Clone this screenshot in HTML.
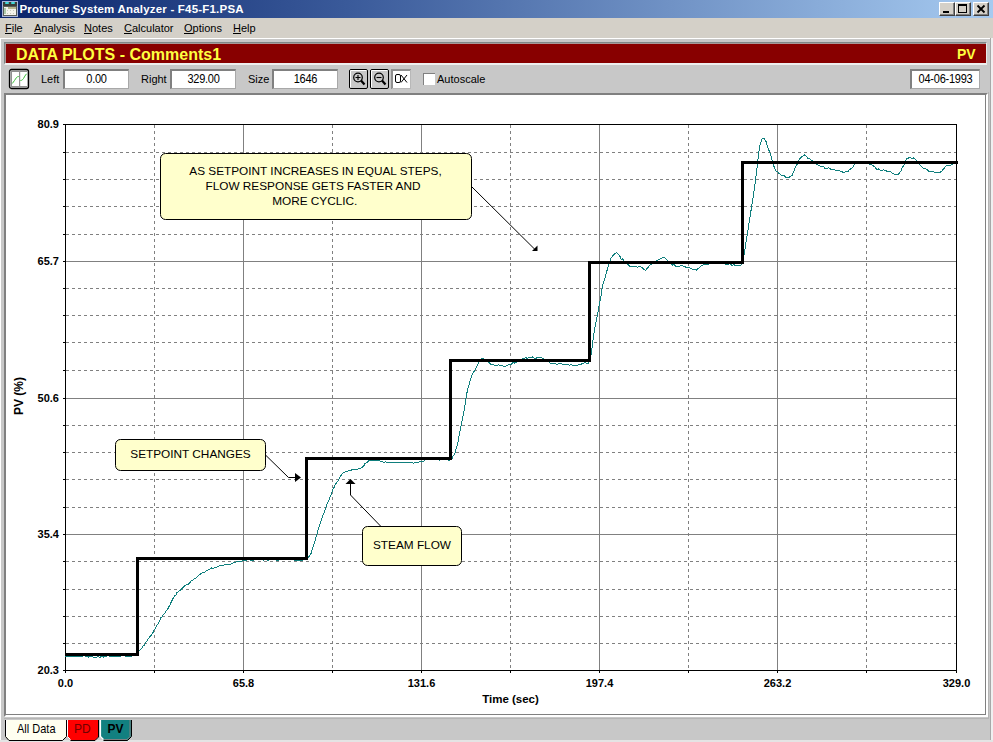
<!DOCTYPE html>
<html><head><meta charset="utf-8"><style>
*{margin:0;padding:0;box-sizing:border-box}
html,body{width:993px;height:742px;overflow:hidden;background:#d4d0c8;font-family:"Liberation Sans", sans-serif;position:relative}
.abs{position:absolute}
.menu span{position:absolute;top:22.5px;font-size:11px;line-height:11px}
.menu u{text-decoration:none;position:relative}
.menu u::after{content:"";position:absolute;left:0;right:0;top:11.5px;height:1px;background:#000}
.inp{position:absolute;background:#fff;border-top:2px solid #808080;border-left:2px solid #808080;border-right:1px solid #a8a8a8;border-bottom:1px solid #a8a8a8;font-size:11px;text-align:center;line-height:16px;letter-spacing:-0.25px}
.inp span{display:inline-block;transform:scaleY(1.08)}
.tbtn{position:absolute;width:16px;height:14px;top:2px;background:#d4d0c8;border-top:1px solid #fff;border-left:1px solid #fff;border-right:1px solid #404040;border-bottom:1px solid #404040;box-shadow:inset -1px -1px 0 #808080}
</style></head><body>
<!-- title bar -->
<div class="abs" style="left:0;top:0;width:993px;height:18px;background:linear-gradient(to right,#0a246a 0%,#3a5a9a 35%,#a6caf0 100%)"></div>
<svg width="20" height="18" style="position:absolute;left:0;top:0">
<rect x="2" y="1" width="16" height="16" fill="#a8b4d8"/>
<rect x="3" y="2" width="14" height="14" fill="#5a5e58"/>
<rect x="3" y="2" width="14" height="4" fill="#3a3e38"/>
<rect x="5" y="2" width="4" height="2" rx="1" fill="#40d8d8"/>
<rect x="11" y="2" width="4" height="2" rx="1" fill="#40d8d8"/>
<rect x="4" y="7" width="12" height="8" fill="#f4f4ec"/>
<rect x="8" y="7" width="8" height="2" fill="#b8b890"/>
<path d="M7 10h1v1h-1zM10 10h1v1h-1zM13 10h1v1h-1zM7 13h1v1h-1zM10 13h1v1h-1zM13 13h1v1h-1z" fill="#c8c8c0"/>
<path d="M5 8 V14" stroke="#68a068" stroke-width="1"/>
</svg>
<div class="abs" style="left:19.5px;top:1.5px;font-size:11.5px;letter-spacing:0.2px;font-weight:bold;color:#fff;line-height:14px;white-space:nowrap">Protuner System Analyzer - F45-F1.PSA</div>
<div class="tbtn" style="left:939px"><div class="abs" style="left:3px;top:8px;width:6px;height:2px;background:#000"></div></div>
<div class="tbtn" style="left:955px"><div class="abs" style="left:2px;top:1px;width:9px;height:9px;border:1px solid #000;border-top-width:2px"></div></div>
<div class="tbtn" style="left:973px;width:16px"><svg width="14" height="12" style="position:absolute;left:0;top:0"><path d="M3.5 2.5 L10.5 9.5 M10.5 2.5 L3.5 9.5" stroke="#000" stroke-width="1.8"/></svg></div>
<!-- menu -->
<div class="menu">
<span style="left:5px"><u>F</u>ile</span>
<span style="left:34px"><u>A</u>nalysis</span>
<span style="left:84px"><u>N</u>otes</span>
<span style="left:124px"><u>C</u>alculator</span>
<span style="left:184px"><u>O</u>ptions</span>
<span style="left:233px"><u>H</u>elp</span>
</div>
<div class="abs" style="left:0;top:38px;width:993px;height:1px;background:#fff"></div>
<div class="abs" style="left:1px;top:39px;width:990px;height:703px;background:#c8c8c8"></div>
<div class="abs" style="left:0;top:38px;width:1px;height:704px;background:#fff"></div>
<div class="abs" style="left:990px;top:38px;width:1px;height:704px;background:#a8a8a8"></div>
<div class="abs" style="left:991px;top:38px;width:2px;height:704px;background:#f0f0f0"></div>
<div class="abs" style="left:988px;top:92px;width:1px;height:627px;background:#b4b4b4"></div>
<div class="abs" style="left:4px;top:718px;width:985px;height:1px;background:#b4b4b4"></div>
<!-- red header -->
<div class="abs" style="left:4px;top:42px;width:983px;height:23px;border-top:1px solid #7f8888;border-left:1px solid #7f8888;border-bottom:2px solid #eeeeee;border-right:1px solid #e8e8e8;background:#880000;box-shadow:inset 1px 1px 0 #a89898"></div>
<div class="abs" style="left:16px;top:45.5px;font-size:16px;font-weight:bold;color:#ffff40;line-height:18px;white-space:nowrap">DATA PLOTS - Comments1</div>
<div class="abs" style="left:957px;top:45.5px;font-size:14px;font-weight:bold;color:#ffff40;line-height:16px">PV</div>
<!-- toolbar -->
<svg width="22" height="22" style="position:absolute;left:8px;top:68px">
<rect x="1.5" y="1.5" width="19" height="19" rx="2" fill="#c8c8c8" stroke="#000" stroke-width="1.3"/>
<rect x="3" y="3" width="16" height="16" fill="#909090"/>
<rect x="4" y="4" width="15" height="14" fill="#fff"/>
<rect x="11" y="4" width="1.2" height="14" fill="#909090"/>
<path d="M4.3 15.5 C6 13.5 7 11.5 8.5 9.5 C9 8.8 10 8.6 10.8 8.5" fill="none" stroke="#3cc03c" stroke-width="1"/>
<path d="M12.4 12.5 C13.5 12.5 14.3 12.2 15.5 10.5 C16.5 9 17.2 7 18.5 5.8" fill="none" stroke="#3cc03c" stroke-width="1"/>
</svg>
<div class="abs" style="left:41px;top:73px;font-size:11px;line-height:12px">Left</div>
<div class="inp" style="left:63px;top:69px;width:66px;height:20px"><span>0.00</span></div>
<div class="abs" style="left:141px;top:73px;font-size:11px;line-height:12px">Right</div>
<div class="inp" style="left:170px;top:69px;width:66px;height:20px"><span>329.00</span></div>
<div class="abs" style="left:248px;top:73px;font-size:11px;line-height:12px">Size</div>
<div class="inp" style="left:272px;top:69px;width:66px;height:20px"><span>1646</span></div>
<svg width="70" height="22" style="position:absolute;left:347px;top:68px">
<rect x="2.5" y="1.5" width="18" height="19" rx="1.5" fill="#c8c8c8" stroke="#000" stroke-width="1"/>
<path d="M3.5 19.5 V2.5 H19.5" stroke="#fff" fill="none"/>
<rect x="23.5" y="1.5" width="18" height="19" rx="1.5" fill="#c8c8c8" stroke="#000" stroke-width="1"/>
<path d="M24.5 19.5 V2.5 H40.5" stroke="#fff" fill="none"/>
<circle cx="11" cy="9.5" r="4.3" fill="none" stroke="#000" stroke-width="1.2"/>
<path d="M8.5 9.5 H13.5 M11 7 V12" stroke="#000" stroke-width="1.1"/>
<path d="M14 12.5 L17.5 16.5" stroke="#000" stroke-width="2.2"/>
<circle cx="32" cy="9.5" r="4.3" fill="none" stroke="#000" stroke-width="1.2"/>
<path d="M29.5 9.5 H34.5" stroke="#000" stroke-width="1.1"/>
<path d="M35 12.5 L38.5 16.5" stroke="#000" stroke-width="2.2"/>
<rect x="44" y="1" width="20" height="20" fill="#909090"/>
<rect x="46" y="3" width="17" height="17" fill="#fff"/>
<rect x="63" y="2" width="1" height="19" fill="#b8b8b8"/><rect x="45" y="20" width="19" height="1" fill="#b8b8b8"/>
<rect x="48.5" y="6.5" width="5" height="8" rx="1.5" fill="none" stroke="#000" stroke-width="1"/>
<path d="M54 7 L60 14.5 M60 7 L54 14.5" stroke="#000" stroke-width="1"/>
</svg>
<div class="abs" style="left:423px;top:73px;width:12px;height:12px;background:#fff;border-top:1px solid #808080;border-left:1px solid #808080"></div>
<div class="abs" style="left:437px;top:73px;font-size:11px;line-height:12px">Autoscale</div>
<div class="inp" style="left:910px;top:69px;width:70px;height:20px"><span>04-06-1993</span></div>
<!-- chart panel -->
<div class="abs" style="left:4px;top:93px;width:984px;height:624px;background:#fff;border-top:2px solid #808080;border-left:2px solid #808080;border-right:2px solid #fff;border-bottom:2px solid #fff;box-shadow:inset -1px -1px 0 #808080"></div>
<svg width="993" height="742" style="position:absolute;left:0;top:0">
<rect x="243" y="124" width="1" height="546" fill="#808080"/>
<rect x="421" y="124" width="1" height="546" fill="#808080"/>
<rect x="599" y="124" width="1" height="546" fill="#808080"/>
<rect x="777" y="124" width="1" height="546" fill="#808080"/>
<rect x="65" y="261" width="891" height="1" fill="#808080"/>
<rect x="65" y="398" width="891" height="1" fill="#808080"/>
<rect x="65" y="534" width="891" height="1" fill="#808080"/>
<path d="M66 152h3v1h-3zM72 152h3v1h-3zM78 152h3v1h-3zM84 152h3v1h-3zM90 152h3v1h-3zM96 152h3v1h-3zM102 152h3v1h-3zM108 152h3v1h-3zM114 152h3v1h-3zM120 152h3v1h-3zM126 152h3v1h-3zM132 152h3v1h-3zM138 152h3v1h-3zM144 152h3v1h-3zM150 152h3v1h-3zM156 152h3v1h-3zM162 152h3v1h-3zM168 152h3v1h-3zM174 152h3v1h-3zM180 152h3v1h-3zM186 152h3v1h-3zM192 152h3v1h-3zM198 152h3v1h-3zM204 152h3v1h-3zM210 152h3v1h-3zM216 152h3v1h-3zM222 152h3v1h-3zM228 152h3v1h-3zM234 152h3v1h-3zM240 152h3v1h-3zM246 152h3v1h-3zM252 152h3v1h-3zM258 152h3v1h-3zM264 152h3v1h-3zM270 152h3v1h-3zM276 152h3v1h-3zM282 152h3v1h-3zM288 152h3v1h-3zM294 152h3v1h-3zM300 152h3v1h-3zM306 152h3v1h-3zM312 152h3v1h-3zM318 152h3v1h-3zM324 152h3v1h-3zM330 152h3v1h-3zM336 152h3v1h-3zM342 152h3v1h-3zM348 152h3v1h-3zM354 152h3v1h-3zM360 152h3v1h-3zM366 152h3v1h-3zM372 152h3v1h-3zM378 152h3v1h-3zM384 152h3v1h-3zM390 152h3v1h-3zM396 152h3v1h-3zM402 152h3v1h-3zM408 152h3v1h-3zM414 152h3v1h-3zM420 152h3v1h-3zM426 152h3v1h-3zM432 152h3v1h-3zM438 152h3v1h-3zM444 152h3v1h-3zM450 152h3v1h-3zM456 152h3v1h-3zM462 152h3v1h-3zM468 152h3v1h-3zM474 152h3v1h-3zM480 152h3v1h-3zM486 152h3v1h-3zM492 152h3v1h-3zM498 152h3v1h-3zM504 152h3v1h-3zM510 152h3v1h-3zM516 152h3v1h-3zM522 152h3v1h-3zM528 152h3v1h-3zM534 152h3v1h-3zM540 152h3v1h-3zM546 152h3v1h-3zM552 152h3v1h-3zM558 152h3v1h-3zM564 152h3v1h-3zM570 152h3v1h-3zM576 152h3v1h-3zM582 152h3v1h-3zM588 152h3v1h-3zM594 152h3v1h-3zM600 152h3v1h-3zM606 152h3v1h-3zM612 152h3v1h-3zM618 152h3v1h-3zM624 152h3v1h-3zM630 152h3v1h-3zM636 152h3v1h-3zM642 152h3v1h-3zM648 152h3v1h-3zM654 152h3v1h-3zM660 152h3v1h-3zM666 152h3v1h-3zM672 152h3v1h-3zM678 152h3v1h-3zM684 152h3v1h-3zM690 152h3v1h-3zM696 152h3v1h-3zM702 152h3v1h-3zM708 152h3v1h-3zM714 152h3v1h-3zM720 152h3v1h-3zM726 152h3v1h-3zM732 152h3v1h-3zM738 152h3v1h-3zM744 152h3v1h-3zM750 152h3v1h-3zM756 152h3v1h-3zM762 152h3v1h-3zM768 152h3v1h-3zM774 152h3v1h-3zM780 152h3v1h-3zM786 152h3v1h-3zM792 152h3v1h-3zM798 152h3v1h-3zM804 152h3v1h-3zM810 152h3v1h-3zM816 152h3v1h-3zM822 152h3v1h-3zM828 152h3v1h-3zM834 152h3v1h-3zM840 152h3v1h-3zM846 152h3v1h-3zM852 152h3v1h-3zM858 152h3v1h-3zM864 152h3v1h-3zM870 152h3v1h-3zM876 152h3v1h-3zM882 152h3v1h-3zM888 152h3v1h-3zM894 152h3v1h-3zM900 152h3v1h-3zM906 152h3v1h-3zM912 152h3v1h-3zM918 152h3v1h-3zM924 152h3v1h-3zM930 152h3v1h-3zM936 152h3v1h-3zM942 152h3v1h-3zM948 152h3v1h-3zM954 152h2v1h-2zM66 179h3v1h-3zM72 179h3v1h-3zM78 179h3v1h-3zM84 179h3v1h-3zM90 179h3v1h-3zM96 179h3v1h-3zM102 179h3v1h-3zM108 179h3v1h-3zM114 179h3v1h-3zM120 179h3v1h-3zM126 179h3v1h-3zM132 179h3v1h-3zM138 179h3v1h-3zM144 179h3v1h-3zM150 179h3v1h-3zM156 179h3v1h-3zM162 179h3v1h-3zM168 179h3v1h-3zM174 179h3v1h-3zM180 179h3v1h-3zM186 179h3v1h-3zM192 179h3v1h-3zM198 179h3v1h-3zM204 179h3v1h-3zM210 179h3v1h-3zM216 179h3v1h-3zM222 179h3v1h-3zM228 179h3v1h-3zM234 179h3v1h-3zM240 179h3v1h-3zM246 179h3v1h-3zM252 179h3v1h-3zM258 179h3v1h-3zM264 179h3v1h-3zM270 179h3v1h-3zM276 179h3v1h-3zM282 179h3v1h-3zM288 179h3v1h-3zM294 179h3v1h-3zM300 179h3v1h-3zM306 179h3v1h-3zM312 179h3v1h-3zM318 179h3v1h-3zM324 179h3v1h-3zM330 179h3v1h-3zM336 179h3v1h-3zM342 179h3v1h-3zM348 179h3v1h-3zM354 179h3v1h-3zM360 179h3v1h-3zM366 179h3v1h-3zM372 179h3v1h-3zM378 179h3v1h-3zM384 179h3v1h-3zM390 179h3v1h-3zM396 179h3v1h-3zM402 179h3v1h-3zM408 179h3v1h-3zM414 179h3v1h-3zM420 179h3v1h-3zM426 179h3v1h-3zM432 179h3v1h-3zM438 179h3v1h-3zM444 179h3v1h-3zM450 179h3v1h-3zM456 179h3v1h-3zM462 179h3v1h-3zM468 179h3v1h-3zM474 179h3v1h-3zM480 179h3v1h-3zM486 179h3v1h-3zM492 179h3v1h-3zM498 179h3v1h-3zM504 179h3v1h-3zM510 179h3v1h-3zM516 179h3v1h-3zM522 179h3v1h-3zM528 179h3v1h-3zM534 179h3v1h-3zM540 179h3v1h-3zM546 179h3v1h-3zM552 179h3v1h-3zM558 179h3v1h-3zM564 179h3v1h-3zM570 179h3v1h-3zM576 179h3v1h-3zM582 179h3v1h-3zM588 179h3v1h-3zM594 179h3v1h-3zM600 179h3v1h-3zM606 179h3v1h-3zM612 179h3v1h-3zM618 179h3v1h-3zM624 179h3v1h-3zM630 179h3v1h-3zM636 179h3v1h-3zM642 179h3v1h-3zM648 179h3v1h-3zM654 179h3v1h-3zM660 179h3v1h-3zM666 179h3v1h-3zM672 179h3v1h-3zM678 179h3v1h-3zM684 179h3v1h-3zM690 179h3v1h-3zM696 179h3v1h-3zM702 179h3v1h-3zM708 179h3v1h-3zM714 179h3v1h-3zM720 179h3v1h-3zM726 179h3v1h-3zM732 179h3v1h-3zM738 179h3v1h-3zM744 179h3v1h-3zM750 179h3v1h-3zM756 179h3v1h-3zM762 179h3v1h-3zM768 179h3v1h-3zM774 179h3v1h-3zM780 179h3v1h-3zM786 179h3v1h-3zM792 179h3v1h-3zM798 179h3v1h-3zM804 179h3v1h-3zM810 179h3v1h-3zM816 179h3v1h-3zM822 179h3v1h-3zM828 179h3v1h-3zM834 179h3v1h-3zM840 179h3v1h-3zM846 179h3v1h-3zM852 179h3v1h-3zM858 179h3v1h-3zM864 179h3v1h-3zM870 179h3v1h-3zM876 179h3v1h-3zM882 179h3v1h-3zM888 179h3v1h-3zM894 179h3v1h-3zM900 179h3v1h-3zM906 179h3v1h-3zM912 179h3v1h-3zM918 179h3v1h-3zM924 179h3v1h-3zM930 179h3v1h-3zM936 179h3v1h-3zM942 179h3v1h-3zM948 179h3v1h-3zM954 179h2v1h-2zM66 206h3v1h-3zM72 206h3v1h-3zM78 206h3v1h-3zM84 206h3v1h-3zM90 206h3v1h-3zM96 206h3v1h-3zM102 206h3v1h-3zM108 206h3v1h-3zM114 206h3v1h-3zM120 206h3v1h-3zM126 206h3v1h-3zM132 206h3v1h-3zM138 206h3v1h-3zM144 206h3v1h-3zM150 206h3v1h-3zM156 206h3v1h-3zM162 206h3v1h-3zM168 206h3v1h-3zM174 206h3v1h-3zM180 206h3v1h-3zM186 206h3v1h-3zM192 206h3v1h-3zM198 206h3v1h-3zM204 206h3v1h-3zM210 206h3v1h-3zM216 206h3v1h-3zM222 206h3v1h-3zM228 206h3v1h-3zM234 206h3v1h-3zM240 206h3v1h-3zM246 206h3v1h-3zM252 206h3v1h-3zM258 206h3v1h-3zM264 206h3v1h-3zM270 206h3v1h-3zM276 206h3v1h-3zM282 206h3v1h-3zM288 206h3v1h-3zM294 206h3v1h-3zM300 206h3v1h-3zM306 206h3v1h-3zM312 206h3v1h-3zM318 206h3v1h-3zM324 206h3v1h-3zM330 206h3v1h-3zM336 206h3v1h-3zM342 206h3v1h-3zM348 206h3v1h-3zM354 206h3v1h-3zM360 206h3v1h-3zM366 206h3v1h-3zM372 206h3v1h-3zM378 206h3v1h-3zM384 206h3v1h-3zM390 206h3v1h-3zM396 206h3v1h-3zM402 206h3v1h-3zM408 206h3v1h-3zM414 206h3v1h-3zM420 206h3v1h-3zM426 206h3v1h-3zM432 206h3v1h-3zM438 206h3v1h-3zM444 206h3v1h-3zM450 206h3v1h-3zM456 206h3v1h-3zM462 206h3v1h-3zM468 206h3v1h-3zM474 206h3v1h-3zM480 206h3v1h-3zM486 206h3v1h-3zM492 206h3v1h-3zM498 206h3v1h-3zM504 206h3v1h-3zM510 206h3v1h-3zM516 206h3v1h-3zM522 206h3v1h-3zM528 206h3v1h-3zM534 206h3v1h-3zM540 206h3v1h-3zM546 206h3v1h-3zM552 206h3v1h-3zM558 206h3v1h-3zM564 206h3v1h-3zM570 206h3v1h-3zM576 206h3v1h-3zM582 206h3v1h-3zM588 206h3v1h-3zM594 206h3v1h-3zM600 206h3v1h-3zM606 206h3v1h-3zM612 206h3v1h-3zM618 206h3v1h-3zM624 206h3v1h-3zM630 206h3v1h-3zM636 206h3v1h-3zM642 206h3v1h-3zM648 206h3v1h-3zM654 206h3v1h-3zM660 206h3v1h-3zM666 206h3v1h-3zM672 206h3v1h-3zM678 206h3v1h-3zM684 206h3v1h-3zM690 206h3v1h-3zM696 206h3v1h-3zM702 206h3v1h-3zM708 206h3v1h-3zM714 206h3v1h-3zM720 206h3v1h-3zM726 206h3v1h-3zM732 206h3v1h-3zM738 206h3v1h-3zM744 206h3v1h-3zM750 206h3v1h-3zM756 206h3v1h-3zM762 206h3v1h-3zM768 206h3v1h-3zM774 206h3v1h-3zM780 206h3v1h-3zM786 206h3v1h-3zM792 206h3v1h-3zM798 206h3v1h-3zM804 206h3v1h-3zM810 206h3v1h-3zM816 206h3v1h-3zM822 206h3v1h-3zM828 206h3v1h-3zM834 206h3v1h-3zM840 206h3v1h-3zM846 206h3v1h-3zM852 206h3v1h-3zM858 206h3v1h-3zM864 206h3v1h-3zM870 206h3v1h-3zM876 206h3v1h-3zM882 206h3v1h-3zM888 206h3v1h-3zM894 206h3v1h-3zM900 206h3v1h-3zM906 206h3v1h-3zM912 206h3v1h-3zM918 206h3v1h-3zM924 206h3v1h-3zM930 206h3v1h-3zM936 206h3v1h-3zM942 206h3v1h-3zM948 206h3v1h-3zM954 206h2v1h-2zM66 234h3v1h-3zM72 234h3v1h-3zM78 234h3v1h-3zM84 234h3v1h-3zM90 234h3v1h-3zM96 234h3v1h-3zM102 234h3v1h-3zM108 234h3v1h-3zM114 234h3v1h-3zM120 234h3v1h-3zM126 234h3v1h-3zM132 234h3v1h-3zM138 234h3v1h-3zM144 234h3v1h-3zM150 234h3v1h-3zM156 234h3v1h-3zM162 234h3v1h-3zM168 234h3v1h-3zM174 234h3v1h-3zM180 234h3v1h-3zM186 234h3v1h-3zM192 234h3v1h-3zM198 234h3v1h-3zM204 234h3v1h-3zM210 234h3v1h-3zM216 234h3v1h-3zM222 234h3v1h-3zM228 234h3v1h-3zM234 234h3v1h-3zM240 234h3v1h-3zM246 234h3v1h-3zM252 234h3v1h-3zM258 234h3v1h-3zM264 234h3v1h-3zM270 234h3v1h-3zM276 234h3v1h-3zM282 234h3v1h-3zM288 234h3v1h-3zM294 234h3v1h-3zM300 234h3v1h-3zM306 234h3v1h-3zM312 234h3v1h-3zM318 234h3v1h-3zM324 234h3v1h-3zM330 234h3v1h-3zM336 234h3v1h-3zM342 234h3v1h-3zM348 234h3v1h-3zM354 234h3v1h-3zM360 234h3v1h-3zM366 234h3v1h-3zM372 234h3v1h-3zM378 234h3v1h-3zM384 234h3v1h-3zM390 234h3v1h-3zM396 234h3v1h-3zM402 234h3v1h-3zM408 234h3v1h-3zM414 234h3v1h-3zM420 234h3v1h-3zM426 234h3v1h-3zM432 234h3v1h-3zM438 234h3v1h-3zM444 234h3v1h-3zM450 234h3v1h-3zM456 234h3v1h-3zM462 234h3v1h-3zM468 234h3v1h-3zM474 234h3v1h-3zM480 234h3v1h-3zM486 234h3v1h-3zM492 234h3v1h-3zM498 234h3v1h-3zM504 234h3v1h-3zM510 234h3v1h-3zM516 234h3v1h-3zM522 234h3v1h-3zM528 234h3v1h-3zM534 234h3v1h-3zM540 234h3v1h-3zM546 234h3v1h-3zM552 234h3v1h-3zM558 234h3v1h-3zM564 234h3v1h-3zM570 234h3v1h-3zM576 234h3v1h-3zM582 234h3v1h-3zM588 234h3v1h-3zM594 234h3v1h-3zM600 234h3v1h-3zM606 234h3v1h-3zM612 234h3v1h-3zM618 234h3v1h-3zM624 234h3v1h-3zM630 234h3v1h-3zM636 234h3v1h-3zM642 234h3v1h-3zM648 234h3v1h-3zM654 234h3v1h-3zM660 234h3v1h-3zM666 234h3v1h-3zM672 234h3v1h-3zM678 234h3v1h-3zM684 234h3v1h-3zM690 234h3v1h-3zM696 234h3v1h-3zM702 234h3v1h-3zM708 234h3v1h-3zM714 234h3v1h-3zM720 234h3v1h-3zM726 234h3v1h-3zM732 234h3v1h-3zM738 234h3v1h-3zM744 234h3v1h-3zM750 234h3v1h-3zM756 234h3v1h-3zM762 234h3v1h-3zM768 234h3v1h-3zM774 234h3v1h-3zM780 234h3v1h-3zM786 234h3v1h-3zM792 234h3v1h-3zM798 234h3v1h-3zM804 234h3v1h-3zM810 234h3v1h-3zM816 234h3v1h-3zM822 234h3v1h-3zM828 234h3v1h-3zM834 234h3v1h-3zM840 234h3v1h-3zM846 234h3v1h-3zM852 234h3v1h-3zM858 234h3v1h-3zM864 234h3v1h-3zM870 234h3v1h-3zM876 234h3v1h-3zM882 234h3v1h-3zM888 234h3v1h-3zM894 234h3v1h-3zM900 234h3v1h-3zM906 234h3v1h-3zM912 234h3v1h-3zM918 234h3v1h-3zM924 234h3v1h-3zM930 234h3v1h-3zM936 234h3v1h-3zM942 234h3v1h-3zM948 234h3v1h-3zM954 234h2v1h-2zM66 288h3v1h-3zM72 288h3v1h-3zM78 288h3v1h-3zM84 288h3v1h-3zM90 288h3v1h-3zM96 288h3v1h-3zM102 288h3v1h-3zM108 288h3v1h-3zM114 288h3v1h-3zM120 288h3v1h-3zM126 288h3v1h-3zM132 288h3v1h-3zM138 288h3v1h-3zM144 288h3v1h-3zM150 288h3v1h-3zM156 288h3v1h-3zM162 288h3v1h-3zM168 288h3v1h-3zM174 288h3v1h-3zM180 288h3v1h-3zM186 288h3v1h-3zM192 288h3v1h-3zM198 288h3v1h-3zM204 288h3v1h-3zM210 288h3v1h-3zM216 288h3v1h-3zM222 288h3v1h-3zM228 288h3v1h-3zM234 288h3v1h-3zM240 288h3v1h-3zM246 288h3v1h-3zM252 288h3v1h-3zM258 288h3v1h-3zM264 288h3v1h-3zM270 288h3v1h-3zM276 288h3v1h-3zM282 288h3v1h-3zM288 288h3v1h-3zM294 288h3v1h-3zM300 288h3v1h-3zM306 288h3v1h-3zM312 288h3v1h-3zM318 288h3v1h-3zM324 288h3v1h-3zM330 288h3v1h-3zM336 288h3v1h-3zM342 288h3v1h-3zM348 288h3v1h-3zM354 288h3v1h-3zM360 288h3v1h-3zM366 288h3v1h-3zM372 288h3v1h-3zM378 288h3v1h-3zM384 288h3v1h-3zM390 288h3v1h-3zM396 288h3v1h-3zM402 288h3v1h-3zM408 288h3v1h-3zM414 288h3v1h-3zM420 288h3v1h-3zM426 288h3v1h-3zM432 288h3v1h-3zM438 288h3v1h-3zM444 288h3v1h-3zM450 288h3v1h-3zM456 288h3v1h-3zM462 288h3v1h-3zM468 288h3v1h-3zM474 288h3v1h-3zM480 288h3v1h-3zM486 288h3v1h-3zM492 288h3v1h-3zM498 288h3v1h-3zM504 288h3v1h-3zM510 288h3v1h-3zM516 288h3v1h-3zM522 288h3v1h-3zM528 288h3v1h-3zM534 288h3v1h-3zM540 288h3v1h-3zM546 288h3v1h-3zM552 288h3v1h-3zM558 288h3v1h-3zM564 288h3v1h-3zM570 288h3v1h-3zM576 288h3v1h-3zM582 288h3v1h-3zM588 288h3v1h-3zM594 288h3v1h-3zM600 288h3v1h-3zM606 288h3v1h-3zM612 288h3v1h-3zM618 288h3v1h-3zM624 288h3v1h-3zM630 288h3v1h-3zM636 288h3v1h-3zM642 288h3v1h-3zM648 288h3v1h-3zM654 288h3v1h-3zM660 288h3v1h-3zM666 288h3v1h-3zM672 288h3v1h-3zM678 288h3v1h-3zM684 288h3v1h-3zM690 288h3v1h-3zM696 288h3v1h-3zM702 288h3v1h-3zM708 288h3v1h-3zM714 288h3v1h-3zM720 288h3v1h-3zM726 288h3v1h-3zM732 288h3v1h-3zM738 288h3v1h-3zM744 288h3v1h-3zM750 288h3v1h-3zM756 288h3v1h-3zM762 288h3v1h-3zM768 288h3v1h-3zM774 288h3v1h-3zM780 288h3v1h-3zM786 288h3v1h-3zM792 288h3v1h-3zM798 288h3v1h-3zM804 288h3v1h-3zM810 288h3v1h-3zM816 288h3v1h-3zM822 288h3v1h-3zM828 288h3v1h-3zM834 288h3v1h-3zM840 288h3v1h-3zM846 288h3v1h-3zM852 288h3v1h-3zM858 288h3v1h-3zM864 288h3v1h-3zM870 288h3v1h-3zM876 288h3v1h-3zM882 288h3v1h-3zM888 288h3v1h-3zM894 288h3v1h-3zM900 288h3v1h-3zM906 288h3v1h-3zM912 288h3v1h-3zM918 288h3v1h-3zM924 288h3v1h-3zM930 288h3v1h-3zM936 288h3v1h-3zM942 288h3v1h-3zM948 288h3v1h-3zM954 288h2v1h-2zM66 315h3v1h-3zM72 315h3v1h-3zM78 315h3v1h-3zM84 315h3v1h-3zM90 315h3v1h-3zM96 315h3v1h-3zM102 315h3v1h-3zM108 315h3v1h-3zM114 315h3v1h-3zM120 315h3v1h-3zM126 315h3v1h-3zM132 315h3v1h-3zM138 315h3v1h-3zM144 315h3v1h-3zM150 315h3v1h-3zM156 315h3v1h-3zM162 315h3v1h-3zM168 315h3v1h-3zM174 315h3v1h-3zM180 315h3v1h-3zM186 315h3v1h-3zM192 315h3v1h-3zM198 315h3v1h-3zM204 315h3v1h-3zM210 315h3v1h-3zM216 315h3v1h-3zM222 315h3v1h-3zM228 315h3v1h-3zM234 315h3v1h-3zM240 315h3v1h-3zM246 315h3v1h-3zM252 315h3v1h-3zM258 315h3v1h-3zM264 315h3v1h-3zM270 315h3v1h-3zM276 315h3v1h-3zM282 315h3v1h-3zM288 315h3v1h-3zM294 315h3v1h-3zM300 315h3v1h-3zM306 315h3v1h-3zM312 315h3v1h-3zM318 315h3v1h-3zM324 315h3v1h-3zM330 315h3v1h-3zM336 315h3v1h-3zM342 315h3v1h-3zM348 315h3v1h-3zM354 315h3v1h-3zM360 315h3v1h-3zM366 315h3v1h-3zM372 315h3v1h-3zM378 315h3v1h-3zM384 315h3v1h-3zM390 315h3v1h-3zM396 315h3v1h-3zM402 315h3v1h-3zM408 315h3v1h-3zM414 315h3v1h-3zM420 315h3v1h-3zM426 315h3v1h-3zM432 315h3v1h-3zM438 315h3v1h-3zM444 315h3v1h-3zM450 315h3v1h-3zM456 315h3v1h-3zM462 315h3v1h-3zM468 315h3v1h-3zM474 315h3v1h-3zM480 315h3v1h-3zM486 315h3v1h-3zM492 315h3v1h-3zM498 315h3v1h-3zM504 315h3v1h-3zM510 315h3v1h-3zM516 315h3v1h-3zM522 315h3v1h-3zM528 315h3v1h-3zM534 315h3v1h-3zM540 315h3v1h-3zM546 315h3v1h-3zM552 315h3v1h-3zM558 315h3v1h-3zM564 315h3v1h-3zM570 315h3v1h-3zM576 315h3v1h-3zM582 315h3v1h-3zM588 315h3v1h-3zM594 315h3v1h-3zM600 315h3v1h-3zM606 315h3v1h-3zM612 315h3v1h-3zM618 315h3v1h-3zM624 315h3v1h-3zM630 315h3v1h-3zM636 315h3v1h-3zM642 315h3v1h-3zM648 315h3v1h-3zM654 315h3v1h-3zM660 315h3v1h-3zM666 315h3v1h-3zM672 315h3v1h-3zM678 315h3v1h-3zM684 315h3v1h-3zM690 315h3v1h-3zM696 315h3v1h-3zM702 315h3v1h-3zM708 315h3v1h-3zM714 315h3v1h-3zM720 315h3v1h-3zM726 315h3v1h-3zM732 315h3v1h-3zM738 315h3v1h-3zM744 315h3v1h-3zM750 315h3v1h-3zM756 315h3v1h-3zM762 315h3v1h-3zM768 315h3v1h-3zM774 315h3v1h-3zM780 315h3v1h-3zM786 315h3v1h-3zM792 315h3v1h-3zM798 315h3v1h-3zM804 315h3v1h-3zM810 315h3v1h-3zM816 315h3v1h-3zM822 315h3v1h-3zM828 315h3v1h-3zM834 315h3v1h-3zM840 315h3v1h-3zM846 315h3v1h-3zM852 315h3v1h-3zM858 315h3v1h-3zM864 315h3v1h-3zM870 315h3v1h-3zM876 315h3v1h-3zM882 315h3v1h-3zM888 315h3v1h-3zM894 315h3v1h-3zM900 315h3v1h-3zM906 315h3v1h-3zM912 315h3v1h-3zM918 315h3v1h-3zM924 315h3v1h-3zM930 315h3v1h-3zM936 315h3v1h-3zM942 315h3v1h-3zM948 315h3v1h-3zM954 315h2v1h-2zM66 342h3v1h-3zM72 342h3v1h-3zM78 342h3v1h-3zM84 342h3v1h-3zM90 342h3v1h-3zM96 342h3v1h-3zM102 342h3v1h-3zM108 342h3v1h-3zM114 342h3v1h-3zM120 342h3v1h-3zM126 342h3v1h-3zM132 342h3v1h-3zM138 342h3v1h-3zM144 342h3v1h-3zM150 342h3v1h-3zM156 342h3v1h-3zM162 342h3v1h-3zM168 342h3v1h-3zM174 342h3v1h-3zM180 342h3v1h-3zM186 342h3v1h-3zM192 342h3v1h-3zM198 342h3v1h-3zM204 342h3v1h-3zM210 342h3v1h-3zM216 342h3v1h-3zM222 342h3v1h-3zM228 342h3v1h-3zM234 342h3v1h-3zM240 342h3v1h-3zM246 342h3v1h-3zM252 342h3v1h-3zM258 342h3v1h-3zM264 342h3v1h-3zM270 342h3v1h-3zM276 342h3v1h-3zM282 342h3v1h-3zM288 342h3v1h-3zM294 342h3v1h-3zM300 342h3v1h-3zM306 342h3v1h-3zM312 342h3v1h-3zM318 342h3v1h-3zM324 342h3v1h-3zM330 342h3v1h-3zM336 342h3v1h-3zM342 342h3v1h-3zM348 342h3v1h-3zM354 342h3v1h-3zM360 342h3v1h-3zM366 342h3v1h-3zM372 342h3v1h-3zM378 342h3v1h-3zM384 342h3v1h-3zM390 342h3v1h-3zM396 342h3v1h-3zM402 342h3v1h-3zM408 342h3v1h-3zM414 342h3v1h-3zM420 342h3v1h-3zM426 342h3v1h-3zM432 342h3v1h-3zM438 342h3v1h-3zM444 342h3v1h-3zM450 342h3v1h-3zM456 342h3v1h-3zM462 342h3v1h-3zM468 342h3v1h-3zM474 342h3v1h-3zM480 342h3v1h-3zM486 342h3v1h-3zM492 342h3v1h-3zM498 342h3v1h-3zM504 342h3v1h-3zM510 342h3v1h-3zM516 342h3v1h-3zM522 342h3v1h-3zM528 342h3v1h-3zM534 342h3v1h-3zM540 342h3v1h-3zM546 342h3v1h-3zM552 342h3v1h-3zM558 342h3v1h-3zM564 342h3v1h-3zM570 342h3v1h-3zM576 342h3v1h-3zM582 342h3v1h-3zM588 342h3v1h-3zM594 342h3v1h-3zM600 342h3v1h-3zM606 342h3v1h-3zM612 342h3v1h-3zM618 342h3v1h-3zM624 342h3v1h-3zM630 342h3v1h-3zM636 342h3v1h-3zM642 342h3v1h-3zM648 342h3v1h-3zM654 342h3v1h-3zM660 342h3v1h-3zM666 342h3v1h-3zM672 342h3v1h-3zM678 342h3v1h-3zM684 342h3v1h-3zM690 342h3v1h-3zM696 342h3v1h-3zM702 342h3v1h-3zM708 342h3v1h-3zM714 342h3v1h-3zM720 342h3v1h-3zM726 342h3v1h-3zM732 342h3v1h-3zM738 342h3v1h-3zM744 342h3v1h-3zM750 342h3v1h-3zM756 342h3v1h-3zM762 342h3v1h-3zM768 342h3v1h-3zM774 342h3v1h-3zM780 342h3v1h-3zM786 342h3v1h-3zM792 342h3v1h-3zM798 342h3v1h-3zM804 342h3v1h-3zM810 342h3v1h-3zM816 342h3v1h-3zM822 342h3v1h-3zM828 342h3v1h-3zM834 342h3v1h-3zM840 342h3v1h-3zM846 342h3v1h-3zM852 342h3v1h-3zM858 342h3v1h-3zM864 342h3v1h-3zM870 342h3v1h-3zM876 342h3v1h-3zM882 342h3v1h-3zM888 342h3v1h-3zM894 342h3v1h-3zM900 342h3v1h-3zM906 342h3v1h-3zM912 342h3v1h-3zM918 342h3v1h-3zM924 342h3v1h-3zM930 342h3v1h-3zM936 342h3v1h-3zM942 342h3v1h-3zM948 342h3v1h-3zM954 342h2v1h-2zM66 370h3v1h-3zM72 370h3v1h-3zM78 370h3v1h-3zM84 370h3v1h-3zM90 370h3v1h-3zM96 370h3v1h-3zM102 370h3v1h-3zM108 370h3v1h-3zM114 370h3v1h-3zM120 370h3v1h-3zM126 370h3v1h-3zM132 370h3v1h-3zM138 370h3v1h-3zM144 370h3v1h-3zM150 370h3v1h-3zM156 370h3v1h-3zM162 370h3v1h-3zM168 370h3v1h-3zM174 370h3v1h-3zM180 370h3v1h-3zM186 370h3v1h-3zM192 370h3v1h-3zM198 370h3v1h-3zM204 370h3v1h-3zM210 370h3v1h-3zM216 370h3v1h-3zM222 370h3v1h-3zM228 370h3v1h-3zM234 370h3v1h-3zM240 370h3v1h-3zM246 370h3v1h-3zM252 370h3v1h-3zM258 370h3v1h-3zM264 370h3v1h-3zM270 370h3v1h-3zM276 370h3v1h-3zM282 370h3v1h-3zM288 370h3v1h-3zM294 370h3v1h-3zM300 370h3v1h-3zM306 370h3v1h-3zM312 370h3v1h-3zM318 370h3v1h-3zM324 370h3v1h-3zM330 370h3v1h-3zM336 370h3v1h-3zM342 370h3v1h-3zM348 370h3v1h-3zM354 370h3v1h-3zM360 370h3v1h-3zM366 370h3v1h-3zM372 370h3v1h-3zM378 370h3v1h-3zM384 370h3v1h-3zM390 370h3v1h-3zM396 370h3v1h-3zM402 370h3v1h-3zM408 370h3v1h-3zM414 370h3v1h-3zM420 370h3v1h-3zM426 370h3v1h-3zM432 370h3v1h-3zM438 370h3v1h-3zM444 370h3v1h-3zM450 370h3v1h-3zM456 370h3v1h-3zM462 370h3v1h-3zM468 370h3v1h-3zM474 370h3v1h-3zM480 370h3v1h-3zM486 370h3v1h-3zM492 370h3v1h-3zM498 370h3v1h-3zM504 370h3v1h-3zM510 370h3v1h-3zM516 370h3v1h-3zM522 370h3v1h-3zM528 370h3v1h-3zM534 370h3v1h-3zM540 370h3v1h-3zM546 370h3v1h-3zM552 370h3v1h-3zM558 370h3v1h-3zM564 370h3v1h-3zM570 370h3v1h-3zM576 370h3v1h-3zM582 370h3v1h-3zM588 370h3v1h-3zM594 370h3v1h-3zM600 370h3v1h-3zM606 370h3v1h-3zM612 370h3v1h-3zM618 370h3v1h-3zM624 370h3v1h-3zM630 370h3v1h-3zM636 370h3v1h-3zM642 370h3v1h-3zM648 370h3v1h-3zM654 370h3v1h-3zM660 370h3v1h-3zM666 370h3v1h-3zM672 370h3v1h-3zM678 370h3v1h-3zM684 370h3v1h-3zM690 370h3v1h-3zM696 370h3v1h-3zM702 370h3v1h-3zM708 370h3v1h-3zM714 370h3v1h-3zM720 370h3v1h-3zM726 370h3v1h-3zM732 370h3v1h-3zM738 370h3v1h-3zM744 370h3v1h-3zM750 370h3v1h-3zM756 370h3v1h-3zM762 370h3v1h-3zM768 370h3v1h-3zM774 370h3v1h-3zM780 370h3v1h-3zM786 370h3v1h-3zM792 370h3v1h-3zM798 370h3v1h-3zM804 370h3v1h-3zM810 370h3v1h-3zM816 370h3v1h-3zM822 370h3v1h-3zM828 370h3v1h-3zM834 370h3v1h-3zM840 370h3v1h-3zM846 370h3v1h-3zM852 370h3v1h-3zM858 370h3v1h-3zM864 370h3v1h-3zM870 370h3v1h-3zM876 370h3v1h-3zM882 370h3v1h-3zM888 370h3v1h-3zM894 370h3v1h-3zM900 370h3v1h-3zM906 370h3v1h-3zM912 370h3v1h-3zM918 370h3v1h-3zM924 370h3v1h-3zM930 370h3v1h-3zM936 370h3v1h-3zM942 370h3v1h-3zM948 370h3v1h-3zM954 370h2v1h-2zM66 425h3v1h-3zM72 425h3v1h-3zM78 425h3v1h-3zM84 425h3v1h-3zM90 425h3v1h-3zM96 425h3v1h-3zM102 425h3v1h-3zM108 425h3v1h-3zM114 425h3v1h-3zM120 425h3v1h-3zM126 425h3v1h-3zM132 425h3v1h-3zM138 425h3v1h-3zM144 425h3v1h-3zM150 425h3v1h-3zM156 425h3v1h-3zM162 425h3v1h-3zM168 425h3v1h-3zM174 425h3v1h-3zM180 425h3v1h-3zM186 425h3v1h-3zM192 425h3v1h-3zM198 425h3v1h-3zM204 425h3v1h-3zM210 425h3v1h-3zM216 425h3v1h-3zM222 425h3v1h-3zM228 425h3v1h-3zM234 425h3v1h-3zM240 425h3v1h-3zM246 425h3v1h-3zM252 425h3v1h-3zM258 425h3v1h-3zM264 425h3v1h-3zM270 425h3v1h-3zM276 425h3v1h-3zM282 425h3v1h-3zM288 425h3v1h-3zM294 425h3v1h-3zM300 425h3v1h-3zM306 425h3v1h-3zM312 425h3v1h-3zM318 425h3v1h-3zM324 425h3v1h-3zM330 425h3v1h-3zM336 425h3v1h-3zM342 425h3v1h-3zM348 425h3v1h-3zM354 425h3v1h-3zM360 425h3v1h-3zM366 425h3v1h-3zM372 425h3v1h-3zM378 425h3v1h-3zM384 425h3v1h-3zM390 425h3v1h-3zM396 425h3v1h-3zM402 425h3v1h-3zM408 425h3v1h-3zM414 425h3v1h-3zM420 425h3v1h-3zM426 425h3v1h-3zM432 425h3v1h-3zM438 425h3v1h-3zM444 425h3v1h-3zM450 425h3v1h-3zM456 425h3v1h-3zM462 425h3v1h-3zM468 425h3v1h-3zM474 425h3v1h-3zM480 425h3v1h-3zM486 425h3v1h-3zM492 425h3v1h-3zM498 425h3v1h-3zM504 425h3v1h-3zM510 425h3v1h-3zM516 425h3v1h-3zM522 425h3v1h-3zM528 425h3v1h-3zM534 425h3v1h-3zM540 425h3v1h-3zM546 425h3v1h-3zM552 425h3v1h-3zM558 425h3v1h-3zM564 425h3v1h-3zM570 425h3v1h-3zM576 425h3v1h-3zM582 425h3v1h-3zM588 425h3v1h-3zM594 425h3v1h-3zM600 425h3v1h-3zM606 425h3v1h-3zM612 425h3v1h-3zM618 425h3v1h-3zM624 425h3v1h-3zM630 425h3v1h-3zM636 425h3v1h-3zM642 425h3v1h-3zM648 425h3v1h-3zM654 425h3v1h-3zM660 425h3v1h-3zM666 425h3v1h-3zM672 425h3v1h-3zM678 425h3v1h-3zM684 425h3v1h-3zM690 425h3v1h-3zM696 425h3v1h-3zM702 425h3v1h-3zM708 425h3v1h-3zM714 425h3v1h-3zM720 425h3v1h-3zM726 425h3v1h-3zM732 425h3v1h-3zM738 425h3v1h-3zM744 425h3v1h-3zM750 425h3v1h-3zM756 425h3v1h-3zM762 425h3v1h-3zM768 425h3v1h-3zM774 425h3v1h-3zM780 425h3v1h-3zM786 425h3v1h-3zM792 425h3v1h-3zM798 425h3v1h-3zM804 425h3v1h-3zM810 425h3v1h-3zM816 425h3v1h-3zM822 425h3v1h-3zM828 425h3v1h-3zM834 425h3v1h-3zM840 425h3v1h-3zM846 425h3v1h-3zM852 425h3v1h-3zM858 425h3v1h-3zM864 425h3v1h-3zM870 425h3v1h-3zM876 425h3v1h-3zM882 425h3v1h-3zM888 425h3v1h-3zM894 425h3v1h-3zM900 425h3v1h-3zM906 425h3v1h-3zM912 425h3v1h-3zM918 425h3v1h-3zM924 425h3v1h-3zM930 425h3v1h-3zM936 425h3v1h-3zM942 425h3v1h-3zM948 425h3v1h-3zM954 425h2v1h-2zM66 452h3v1h-3zM72 452h3v1h-3zM78 452h3v1h-3zM84 452h3v1h-3zM90 452h3v1h-3zM96 452h3v1h-3zM102 452h3v1h-3zM108 452h3v1h-3zM114 452h3v1h-3zM120 452h3v1h-3zM126 452h3v1h-3zM132 452h3v1h-3zM138 452h3v1h-3zM144 452h3v1h-3zM150 452h3v1h-3zM156 452h3v1h-3zM162 452h3v1h-3zM168 452h3v1h-3zM174 452h3v1h-3zM180 452h3v1h-3zM186 452h3v1h-3zM192 452h3v1h-3zM198 452h3v1h-3zM204 452h3v1h-3zM210 452h3v1h-3zM216 452h3v1h-3zM222 452h3v1h-3zM228 452h3v1h-3zM234 452h3v1h-3zM240 452h3v1h-3zM246 452h3v1h-3zM252 452h3v1h-3zM258 452h3v1h-3zM264 452h3v1h-3zM270 452h3v1h-3zM276 452h3v1h-3zM282 452h3v1h-3zM288 452h3v1h-3zM294 452h3v1h-3zM300 452h3v1h-3zM306 452h3v1h-3zM312 452h3v1h-3zM318 452h3v1h-3zM324 452h3v1h-3zM330 452h3v1h-3zM336 452h3v1h-3zM342 452h3v1h-3zM348 452h3v1h-3zM354 452h3v1h-3zM360 452h3v1h-3zM366 452h3v1h-3zM372 452h3v1h-3zM378 452h3v1h-3zM384 452h3v1h-3zM390 452h3v1h-3zM396 452h3v1h-3zM402 452h3v1h-3zM408 452h3v1h-3zM414 452h3v1h-3zM420 452h3v1h-3zM426 452h3v1h-3zM432 452h3v1h-3zM438 452h3v1h-3zM444 452h3v1h-3zM450 452h3v1h-3zM456 452h3v1h-3zM462 452h3v1h-3zM468 452h3v1h-3zM474 452h3v1h-3zM480 452h3v1h-3zM486 452h3v1h-3zM492 452h3v1h-3zM498 452h3v1h-3zM504 452h3v1h-3zM510 452h3v1h-3zM516 452h3v1h-3zM522 452h3v1h-3zM528 452h3v1h-3zM534 452h3v1h-3zM540 452h3v1h-3zM546 452h3v1h-3zM552 452h3v1h-3zM558 452h3v1h-3zM564 452h3v1h-3zM570 452h3v1h-3zM576 452h3v1h-3zM582 452h3v1h-3zM588 452h3v1h-3zM594 452h3v1h-3zM600 452h3v1h-3zM606 452h3v1h-3zM612 452h3v1h-3zM618 452h3v1h-3zM624 452h3v1h-3zM630 452h3v1h-3zM636 452h3v1h-3zM642 452h3v1h-3zM648 452h3v1h-3zM654 452h3v1h-3zM660 452h3v1h-3zM666 452h3v1h-3zM672 452h3v1h-3zM678 452h3v1h-3zM684 452h3v1h-3zM690 452h3v1h-3zM696 452h3v1h-3zM702 452h3v1h-3zM708 452h3v1h-3zM714 452h3v1h-3zM720 452h3v1h-3zM726 452h3v1h-3zM732 452h3v1h-3zM738 452h3v1h-3zM744 452h3v1h-3zM750 452h3v1h-3zM756 452h3v1h-3zM762 452h3v1h-3zM768 452h3v1h-3zM774 452h3v1h-3zM780 452h3v1h-3zM786 452h3v1h-3zM792 452h3v1h-3zM798 452h3v1h-3zM804 452h3v1h-3zM810 452h3v1h-3zM816 452h3v1h-3zM822 452h3v1h-3zM828 452h3v1h-3zM834 452h3v1h-3zM840 452h3v1h-3zM846 452h3v1h-3zM852 452h3v1h-3zM858 452h3v1h-3zM864 452h3v1h-3zM870 452h3v1h-3zM876 452h3v1h-3zM882 452h3v1h-3zM888 452h3v1h-3zM894 452h3v1h-3zM900 452h3v1h-3zM906 452h3v1h-3zM912 452h3v1h-3zM918 452h3v1h-3zM924 452h3v1h-3zM930 452h3v1h-3zM936 452h3v1h-3zM942 452h3v1h-3zM948 452h3v1h-3zM954 452h2v1h-2zM66 479h3v1h-3zM72 479h3v1h-3zM78 479h3v1h-3zM84 479h3v1h-3zM90 479h3v1h-3zM96 479h3v1h-3zM102 479h3v1h-3zM108 479h3v1h-3zM114 479h3v1h-3zM120 479h3v1h-3zM126 479h3v1h-3zM132 479h3v1h-3zM138 479h3v1h-3zM144 479h3v1h-3zM150 479h3v1h-3zM156 479h3v1h-3zM162 479h3v1h-3zM168 479h3v1h-3zM174 479h3v1h-3zM180 479h3v1h-3zM186 479h3v1h-3zM192 479h3v1h-3zM198 479h3v1h-3zM204 479h3v1h-3zM210 479h3v1h-3zM216 479h3v1h-3zM222 479h3v1h-3zM228 479h3v1h-3zM234 479h3v1h-3zM240 479h3v1h-3zM246 479h3v1h-3zM252 479h3v1h-3zM258 479h3v1h-3zM264 479h3v1h-3zM270 479h3v1h-3zM276 479h3v1h-3zM282 479h3v1h-3zM288 479h3v1h-3zM294 479h3v1h-3zM300 479h3v1h-3zM306 479h3v1h-3zM312 479h3v1h-3zM318 479h3v1h-3zM324 479h3v1h-3zM330 479h3v1h-3zM336 479h3v1h-3zM342 479h3v1h-3zM348 479h3v1h-3zM354 479h3v1h-3zM360 479h3v1h-3zM366 479h3v1h-3zM372 479h3v1h-3zM378 479h3v1h-3zM384 479h3v1h-3zM390 479h3v1h-3zM396 479h3v1h-3zM402 479h3v1h-3zM408 479h3v1h-3zM414 479h3v1h-3zM420 479h3v1h-3zM426 479h3v1h-3zM432 479h3v1h-3zM438 479h3v1h-3zM444 479h3v1h-3zM450 479h3v1h-3zM456 479h3v1h-3zM462 479h3v1h-3zM468 479h3v1h-3zM474 479h3v1h-3zM480 479h3v1h-3zM486 479h3v1h-3zM492 479h3v1h-3zM498 479h3v1h-3zM504 479h3v1h-3zM510 479h3v1h-3zM516 479h3v1h-3zM522 479h3v1h-3zM528 479h3v1h-3zM534 479h3v1h-3zM540 479h3v1h-3zM546 479h3v1h-3zM552 479h3v1h-3zM558 479h3v1h-3zM564 479h3v1h-3zM570 479h3v1h-3zM576 479h3v1h-3zM582 479h3v1h-3zM588 479h3v1h-3zM594 479h3v1h-3zM600 479h3v1h-3zM606 479h3v1h-3zM612 479h3v1h-3zM618 479h3v1h-3zM624 479h3v1h-3zM630 479h3v1h-3zM636 479h3v1h-3zM642 479h3v1h-3zM648 479h3v1h-3zM654 479h3v1h-3zM660 479h3v1h-3zM666 479h3v1h-3zM672 479h3v1h-3zM678 479h3v1h-3zM684 479h3v1h-3zM690 479h3v1h-3zM696 479h3v1h-3zM702 479h3v1h-3zM708 479h3v1h-3zM714 479h3v1h-3zM720 479h3v1h-3zM726 479h3v1h-3zM732 479h3v1h-3zM738 479h3v1h-3zM744 479h3v1h-3zM750 479h3v1h-3zM756 479h3v1h-3zM762 479h3v1h-3zM768 479h3v1h-3zM774 479h3v1h-3zM780 479h3v1h-3zM786 479h3v1h-3zM792 479h3v1h-3zM798 479h3v1h-3zM804 479h3v1h-3zM810 479h3v1h-3zM816 479h3v1h-3zM822 479h3v1h-3zM828 479h3v1h-3zM834 479h3v1h-3zM840 479h3v1h-3zM846 479h3v1h-3zM852 479h3v1h-3zM858 479h3v1h-3zM864 479h3v1h-3zM870 479h3v1h-3zM876 479h3v1h-3zM882 479h3v1h-3zM888 479h3v1h-3zM894 479h3v1h-3zM900 479h3v1h-3zM906 479h3v1h-3zM912 479h3v1h-3zM918 479h3v1h-3zM924 479h3v1h-3zM930 479h3v1h-3zM936 479h3v1h-3zM942 479h3v1h-3zM948 479h3v1h-3zM954 479h2v1h-2zM66 507h3v1h-3zM72 507h3v1h-3zM78 507h3v1h-3zM84 507h3v1h-3zM90 507h3v1h-3zM96 507h3v1h-3zM102 507h3v1h-3zM108 507h3v1h-3zM114 507h3v1h-3zM120 507h3v1h-3zM126 507h3v1h-3zM132 507h3v1h-3zM138 507h3v1h-3zM144 507h3v1h-3zM150 507h3v1h-3zM156 507h3v1h-3zM162 507h3v1h-3zM168 507h3v1h-3zM174 507h3v1h-3zM180 507h3v1h-3zM186 507h3v1h-3zM192 507h3v1h-3zM198 507h3v1h-3zM204 507h3v1h-3zM210 507h3v1h-3zM216 507h3v1h-3zM222 507h3v1h-3zM228 507h3v1h-3zM234 507h3v1h-3zM240 507h3v1h-3zM246 507h3v1h-3zM252 507h3v1h-3zM258 507h3v1h-3zM264 507h3v1h-3zM270 507h3v1h-3zM276 507h3v1h-3zM282 507h3v1h-3zM288 507h3v1h-3zM294 507h3v1h-3zM300 507h3v1h-3zM306 507h3v1h-3zM312 507h3v1h-3zM318 507h3v1h-3zM324 507h3v1h-3zM330 507h3v1h-3zM336 507h3v1h-3zM342 507h3v1h-3zM348 507h3v1h-3zM354 507h3v1h-3zM360 507h3v1h-3zM366 507h3v1h-3zM372 507h3v1h-3zM378 507h3v1h-3zM384 507h3v1h-3zM390 507h3v1h-3zM396 507h3v1h-3zM402 507h3v1h-3zM408 507h3v1h-3zM414 507h3v1h-3zM420 507h3v1h-3zM426 507h3v1h-3zM432 507h3v1h-3zM438 507h3v1h-3zM444 507h3v1h-3zM450 507h3v1h-3zM456 507h3v1h-3zM462 507h3v1h-3zM468 507h3v1h-3zM474 507h3v1h-3zM480 507h3v1h-3zM486 507h3v1h-3zM492 507h3v1h-3zM498 507h3v1h-3zM504 507h3v1h-3zM510 507h3v1h-3zM516 507h3v1h-3zM522 507h3v1h-3zM528 507h3v1h-3zM534 507h3v1h-3zM540 507h3v1h-3zM546 507h3v1h-3zM552 507h3v1h-3zM558 507h3v1h-3zM564 507h3v1h-3zM570 507h3v1h-3zM576 507h3v1h-3zM582 507h3v1h-3zM588 507h3v1h-3zM594 507h3v1h-3zM600 507h3v1h-3zM606 507h3v1h-3zM612 507h3v1h-3zM618 507h3v1h-3zM624 507h3v1h-3zM630 507h3v1h-3zM636 507h3v1h-3zM642 507h3v1h-3zM648 507h3v1h-3zM654 507h3v1h-3zM660 507h3v1h-3zM666 507h3v1h-3zM672 507h3v1h-3zM678 507h3v1h-3zM684 507h3v1h-3zM690 507h3v1h-3zM696 507h3v1h-3zM702 507h3v1h-3zM708 507h3v1h-3zM714 507h3v1h-3zM720 507h3v1h-3zM726 507h3v1h-3zM732 507h3v1h-3zM738 507h3v1h-3zM744 507h3v1h-3zM750 507h3v1h-3zM756 507h3v1h-3zM762 507h3v1h-3zM768 507h3v1h-3zM774 507h3v1h-3zM780 507h3v1h-3zM786 507h3v1h-3zM792 507h3v1h-3zM798 507h3v1h-3zM804 507h3v1h-3zM810 507h3v1h-3zM816 507h3v1h-3zM822 507h3v1h-3zM828 507h3v1h-3zM834 507h3v1h-3zM840 507h3v1h-3zM846 507h3v1h-3zM852 507h3v1h-3zM858 507h3v1h-3zM864 507h3v1h-3zM870 507h3v1h-3zM876 507h3v1h-3zM882 507h3v1h-3zM888 507h3v1h-3zM894 507h3v1h-3zM900 507h3v1h-3zM906 507h3v1h-3zM912 507h3v1h-3zM918 507h3v1h-3zM924 507h3v1h-3zM930 507h3v1h-3zM936 507h3v1h-3zM942 507h3v1h-3zM948 507h3v1h-3zM954 507h2v1h-2zM66 561h3v1h-3zM72 561h3v1h-3zM78 561h3v1h-3zM84 561h3v1h-3zM90 561h3v1h-3zM96 561h3v1h-3zM102 561h3v1h-3zM108 561h3v1h-3zM114 561h3v1h-3zM120 561h3v1h-3zM126 561h3v1h-3zM132 561h3v1h-3zM138 561h3v1h-3zM144 561h3v1h-3zM150 561h3v1h-3zM156 561h3v1h-3zM162 561h3v1h-3zM168 561h3v1h-3zM174 561h3v1h-3zM180 561h3v1h-3zM186 561h3v1h-3zM192 561h3v1h-3zM198 561h3v1h-3zM204 561h3v1h-3zM210 561h3v1h-3zM216 561h3v1h-3zM222 561h3v1h-3zM228 561h3v1h-3zM234 561h3v1h-3zM240 561h3v1h-3zM246 561h3v1h-3zM252 561h3v1h-3zM258 561h3v1h-3zM264 561h3v1h-3zM270 561h3v1h-3zM276 561h3v1h-3zM282 561h3v1h-3zM288 561h3v1h-3zM294 561h3v1h-3zM300 561h3v1h-3zM306 561h3v1h-3zM312 561h3v1h-3zM318 561h3v1h-3zM324 561h3v1h-3zM330 561h3v1h-3zM336 561h3v1h-3zM342 561h3v1h-3zM348 561h3v1h-3zM354 561h3v1h-3zM360 561h3v1h-3zM366 561h3v1h-3zM372 561h3v1h-3zM378 561h3v1h-3zM384 561h3v1h-3zM390 561h3v1h-3zM396 561h3v1h-3zM402 561h3v1h-3zM408 561h3v1h-3zM414 561h3v1h-3zM420 561h3v1h-3zM426 561h3v1h-3zM432 561h3v1h-3zM438 561h3v1h-3zM444 561h3v1h-3zM450 561h3v1h-3zM456 561h3v1h-3zM462 561h3v1h-3zM468 561h3v1h-3zM474 561h3v1h-3zM480 561h3v1h-3zM486 561h3v1h-3zM492 561h3v1h-3zM498 561h3v1h-3zM504 561h3v1h-3zM510 561h3v1h-3zM516 561h3v1h-3zM522 561h3v1h-3zM528 561h3v1h-3zM534 561h3v1h-3zM540 561h3v1h-3zM546 561h3v1h-3zM552 561h3v1h-3zM558 561h3v1h-3zM564 561h3v1h-3zM570 561h3v1h-3zM576 561h3v1h-3zM582 561h3v1h-3zM588 561h3v1h-3zM594 561h3v1h-3zM600 561h3v1h-3zM606 561h3v1h-3zM612 561h3v1h-3zM618 561h3v1h-3zM624 561h3v1h-3zM630 561h3v1h-3zM636 561h3v1h-3zM642 561h3v1h-3zM648 561h3v1h-3zM654 561h3v1h-3zM660 561h3v1h-3zM666 561h3v1h-3zM672 561h3v1h-3zM678 561h3v1h-3zM684 561h3v1h-3zM690 561h3v1h-3zM696 561h3v1h-3zM702 561h3v1h-3zM708 561h3v1h-3zM714 561h3v1h-3zM720 561h3v1h-3zM726 561h3v1h-3zM732 561h3v1h-3zM738 561h3v1h-3zM744 561h3v1h-3zM750 561h3v1h-3zM756 561h3v1h-3zM762 561h3v1h-3zM768 561h3v1h-3zM774 561h3v1h-3zM780 561h3v1h-3zM786 561h3v1h-3zM792 561h3v1h-3zM798 561h3v1h-3zM804 561h3v1h-3zM810 561h3v1h-3zM816 561h3v1h-3zM822 561h3v1h-3zM828 561h3v1h-3zM834 561h3v1h-3zM840 561h3v1h-3zM846 561h3v1h-3zM852 561h3v1h-3zM858 561h3v1h-3zM864 561h3v1h-3zM870 561h3v1h-3zM876 561h3v1h-3zM882 561h3v1h-3zM888 561h3v1h-3zM894 561h3v1h-3zM900 561h3v1h-3zM906 561h3v1h-3zM912 561h3v1h-3zM918 561h3v1h-3zM924 561h3v1h-3zM930 561h3v1h-3zM936 561h3v1h-3zM942 561h3v1h-3zM948 561h3v1h-3zM954 561h2v1h-2zM66 589h3v1h-3zM72 589h3v1h-3zM78 589h3v1h-3zM84 589h3v1h-3zM90 589h3v1h-3zM96 589h3v1h-3zM102 589h3v1h-3zM108 589h3v1h-3zM114 589h3v1h-3zM120 589h3v1h-3zM126 589h3v1h-3zM132 589h3v1h-3zM138 589h3v1h-3zM144 589h3v1h-3zM150 589h3v1h-3zM156 589h3v1h-3zM162 589h3v1h-3zM168 589h3v1h-3zM174 589h3v1h-3zM180 589h3v1h-3zM186 589h3v1h-3zM192 589h3v1h-3zM198 589h3v1h-3zM204 589h3v1h-3zM210 589h3v1h-3zM216 589h3v1h-3zM222 589h3v1h-3zM228 589h3v1h-3zM234 589h3v1h-3zM240 589h3v1h-3zM246 589h3v1h-3zM252 589h3v1h-3zM258 589h3v1h-3zM264 589h3v1h-3zM270 589h3v1h-3zM276 589h3v1h-3zM282 589h3v1h-3zM288 589h3v1h-3zM294 589h3v1h-3zM300 589h3v1h-3zM306 589h3v1h-3zM312 589h3v1h-3zM318 589h3v1h-3zM324 589h3v1h-3zM330 589h3v1h-3zM336 589h3v1h-3zM342 589h3v1h-3zM348 589h3v1h-3zM354 589h3v1h-3zM360 589h3v1h-3zM366 589h3v1h-3zM372 589h3v1h-3zM378 589h3v1h-3zM384 589h3v1h-3zM390 589h3v1h-3zM396 589h3v1h-3zM402 589h3v1h-3zM408 589h3v1h-3zM414 589h3v1h-3zM420 589h3v1h-3zM426 589h3v1h-3zM432 589h3v1h-3zM438 589h3v1h-3zM444 589h3v1h-3zM450 589h3v1h-3zM456 589h3v1h-3zM462 589h3v1h-3zM468 589h3v1h-3zM474 589h3v1h-3zM480 589h3v1h-3zM486 589h3v1h-3zM492 589h3v1h-3zM498 589h3v1h-3zM504 589h3v1h-3zM510 589h3v1h-3zM516 589h3v1h-3zM522 589h3v1h-3zM528 589h3v1h-3zM534 589h3v1h-3zM540 589h3v1h-3zM546 589h3v1h-3zM552 589h3v1h-3zM558 589h3v1h-3zM564 589h3v1h-3zM570 589h3v1h-3zM576 589h3v1h-3zM582 589h3v1h-3zM588 589h3v1h-3zM594 589h3v1h-3zM600 589h3v1h-3zM606 589h3v1h-3zM612 589h3v1h-3zM618 589h3v1h-3zM624 589h3v1h-3zM630 589h3v1h-3zM636 589h3v1h-3zM642 589h3v1h-3zM648 589h3v1h-3zM654 589h3v1h-3zM660 589h3v1h-3zM666 589h3v1h-3zM672 589h3v1h-3zM678 589h3v1h-3zM684 589h3v1h-3zM690 589h3v1h-3zM696 589h3v1h-3zM702 589h3v1h-3zM708 589h3v1h-3zM714 589h3v1h-3zM720 589h3v1h-3zM726 589h3v1h-3zM732 589h3v1h-3zM738 589h3v1h-3zM744 589h3v1h-3zM750 589h3v1h-3zM756 589h3v1h-3zM762 589h3v1h-3zM768 589h3v1h-3zM774 589h3v1h-3zM780 589h3v1h-3zM786 589h3v1h-3zM792 589h3v1h-3zM798 589h3v1h-3zM804 589h3v1h-3zM810 589h3v1h-3zM816 589h3v1h-3zM822 589h3v1h-3zM828 589h3v1h-3zM834 589h3v1h-3zM840 589h3v1h-3zM846 589h3v1h-3zM852 589h3v1h-3zM858 589h3v1h-3zM864 589h3v1h-3zM870 589h3v1h-3zM876 589h3v1h-3zM882 589h3v1h-3zM888 589h3v1h-3zM894 589h3v1h-3zM900 589h3v1h-3zM906 589h3v1h-3zM912 589h3v1h-3zM918 589h3v1h-3zM924 589h3v1h-3zM930 589h3v1h-3zM936 589h3v1h-3zM942 589h3v1h-3zM948 589h3v1h-3zM954 589h2v1h-2zM66 616h3v1h-3zM72 616h3v1h-3zM78 616h3v1h-3zM84 616h3v1h-3zM90 616h3v1h-3zM96 616h3v1h-3zM102 616h3v1h-3zM108 616h3v1h-3zM114 616h3v1h-3zM120 616h3v1h-3zM126 616h3v1h-3zM132 616h3v1h-3zM138 616h3v1h-3zM144 616h3v1h-3zM150 616h3v1h-3zM156 616h3v1h-3zM162 616h3v1h-3zM168 616h3v1h-3zM174 616h3v1h-3zM180 616h3v1h-3zM186 616h3v1h-3zM192 616h3v1h-3zM198 616h3v1h-3zM204 616h3v1h-3zM210 616h3v1h-3zM216 616h3v1h-3zM222 616h3v1h-3zM228 616h3v1h-3zM234 616h3v1h-3zM240 616h3v1h-3zM246 616h3v1h-3zM252 616h3v1h-3zM258 616h3v1h-3zM264 616h3v1h-3zM270 616h3v1h-3zM276 616h3v1h-3zM282 616h3v1h-3zM288 616h3v1h-3zM294 616h3v1h-3zM300 616h3v1h-3zM306 616h3v1h-3zM312 616h3v1h-3zM318 616h3v1h-3zM324 616h3v1h-3zM330 616h3v1h-3zM336 616h3v1h-3zM342 616h3v1h-3zM348 616h3v1h-3zM354 616h3v1h-3zM360 616h3v1h-3zM366 616h3v1h-3zM372 616h3v1h-3zM378 616h3v1h-3zM384 616h3v1h-3zM390 616h3v1h-3zM396 616h3v1h-3zM402 616h3v1h-3zM408 616h3v1h-3zM414 616h3v1h-3zM420 616h3v1h-3zM426 616h3v1h-3zM432 616h3v1h-3zM438 616h3v1h-3zM444 616h3v1h-3zM450 616h3v1h-3zM456 616h3v1h-3zM462 616h3v1h-3zM468 616h3v1h-3zM474 616h3v1h-3zM480 616h3v1h-3zM486 616h3v1h-3zM492 616h3v1h-3zM498 616h3v1h-3zM504 616h3v1h-3zM510 616h3v1h-3zM516 616h3v1h-3zM522 616h3v1h-3zM528 616h3v1h-3zM534 616h3v1h-3zM540 616h3v1h-3zM546 616h3v1h-3zM552 616h3v1h-3zM558 616h3v1h-3zM564 616h3v1h-3zM570 616h3v1h-3zM576 616h3v1h-3zM582 616h3v1h-3zM588 616h3v1h-3zM594 616h3v1h-3zM600 616h3v1h-3zM606 616h3v1h-3zM612 616h3v1h-3zM618 616h3v1h-3zM624 616h3v1h-3zM630 616h3v1h-3zM636 616h3v1h-3zM642 616h3v1h-3zM648 616h3v1h-3zM654 616h3v1h-3zM660 616h3v1h-3zM666 616h3v1h-3zM672 616h3v1h-3zM678 616h3v1h-3zM684 616h3v1h-3zM690 616h3v1h-3zM696 616h3v1h-3zM702 616h3v1h-3zM708 616h3v1h-3zM714 616h3v1h-3zM720 616h3v1h-3zM726 616h3v1h-3zM732 616h3v1h-3zM738 616h3v1h-3zM744 616h3v1h-3zM750 616h3v1h-3zM756 616h3v1h-3zM762 616h3v1h-3zM768 616h3v1h-3zM774 616h3v1h-3zM780 616h3v1h-3zM786 616h3v1h-3zM792 616h3v1h-3zM798 616h3v1h-3zM804 616h3v1h-3zM810 616h3v1h-3zM816 616h3v1h-3zM822 616h3v1h-3zM828 616h3v1h-3zM834 616h3v1h-3zM840 616h3v1h-3zM846 616h3v1h-3zM852 616h3v1h-3zM858 616h3v1h-3zM864 616h3v1h-3zM870 616h3v1h-3zM876 616h3v1h-3zM882 616h3v1h-3zM888 616h3v1h-3zM894 616h3v1h-3zM900 616h3v1h-3zM906 616h3v1h-3zM912 616h3v1h-3zM918 616h3v1h-3zM924 616h3v1h-3zM930 616h3v1h-3zM936 616h3v1h-3zM942 616h3v1h-3zM948 616h3v1h-3zM954 616h2v1h-2zM66 643h3v1h-3zM72 643h3v1h-3zM78 643h3v1h-3zM84 643h3v1h-3zM90 643h3v1h-3zM96 643h3v1h-3zM102 643h3v1h-3zM108 643h3v1h-3zM114 643h3v1h-3zM120 643h3v1h-3zM126 643h3v1h-3zM132 643h3v1h-3zM138 643h3v1h-3zM144 643h3v1h-3zM150 643h3v1h-3zM156 643h3v1h-3zM162 643h3v1h-3zM168 643h3v1h-3zM174 643h3v1h-3zM180 643h3v1h-3zM186 643h3v1h-3zM192 643h3v1h-3zM198 643h3v1h-3zM204 643h3v1h-3zM210 643h3v1h-3zM216 643h3v1h-3zM222 643h3v1h-3zM228 643h3v1h-3zM234 643h3v1h-3zM240 643h3v1h-3zM246 643h3v1h-3zM252 643h3v1h-3zM258 643h3v1h-3zM264 643h3v1h-3zM270 643h3v1h-3zM276 643h3v1h-3zM282 643h3v1h-3zM288 643h3v1h-3zM294 643h3v1h-3zM300 643h3v1h-3zM306 643h3v1h-3zM312 643h3v1h-3zM318 643h3v1h-3zM324 643h3v1h-3zM330 643h3v1h-3zM336 643h3v1h-3zM342 643h3v1h-3zM348 643h3v1h-3zM354 643h3v1h-3zM360 643h3v1h-3zM366 643h3v1h-3zM372 643h3v1h-3zM378 643h3v1h-3zM384 643h3v1h-3zM390 643h3v1h-3zM396 643h3v1h-3zM402 643h3v1h-3zM408 643h3v1h-3zM414 643h3v1h-3zM420 643h3v1h-3zM426 643h3v1h-3zM432 643h3v1h-3zM438 643h3v1h-3zM444 643h3v1h-3zM450 643h3v1h-3zM456 643h3v1h-3zM462 643h3v1h-3zM468 643h3v1h-3zM474 643h3v1h-3zM480 643h3v1h-3zM486 643h3v1h-3zM492 643h3v1h-3zM498 643h3v1h-3zM504 643h3v1h-3zM510 643h3v1h-3zM516 643h3v1h-3zM522 643h3v1h-3zM528 643h3v1h-3zM534 643h3v1h-3zM540 643h3v1h-3zM546 643h3v1h-3zM552 643h3v1h-3zM558 643h3v1h-3zM564 643h3v1h-3zM570 643h3v1h-3zM576 643h3v1h-3zM582 643h3v1h-3zM588 643h3v1h-3zM594 643h3v1h-3zM600 643h3v1h-3zM606 643h3v1h-3zM612 643h3v1h-3zM618 643h3v1h-3zM624 643h3v1h-3zM630 643h3v1h-3zM636 643h3v1h-3zM642 643h3v1h-3zM648 643h3v1h-3zM654 643h3v1h-3zM660 643h3v1h-3zM666 643h3v1h-3zM672 643h3v1h-3zM678 643h3v1h-3zM684 643h3v1h-3zM690 643h3v1h-3zM696 643h3v1h-3zM702 643h3v1h-3zM708 643h3v1h-3zM714 643h3v1h-3zM720 643h3v1h-3zM726 643h3v1h-3zM732 643h3v1h-3zM738 643h3v1h-3zM744 643h3v1h-3zM750 643h3v1h-3zM756 643h3v1h-3zM762 643h3v1h-3zM768 643h3v1h-3zM774 643h3v1h-3zM780 643h3v1h-3zM786 643h3v1h-3zM792 643h3v1h-3zM798 643h3v1h-3zM804 643h3v1h-3zM810 643h3v1h-3zM816 643h3v1h-3zM822 643h3v1h-3zM828 643h3v1h-3zM834 643h3v1h-3zM840 643h3v1h-3zM846 643h3v1h-3zM852 643h3v1h-3zM858 643h3v1h-3zM864 643h3v1h-3zM870 643h3v1h-3zM876 643h3v1h-3zM882 643h3v1h-3zM888 643h3v1h-3zM894 643h3v1h-3zM900 643h3v1h-3zM906 643h3v1h-3zM912 643h3v1h-3zM918 643h3v1h-3zM924 643h3v1h-3zM930 643h3v1h-3zM936 643h3v1h-3zM942 643h3v1h-3zM948 643h3v1h-3zM954 643h2v1h-2zM154 125h1v3h-1zM154 131h1v3h-1zM154 137h1v3h-1zM154 143h1v3h-1zM154 149h1v3h-1zM154 155h1v3h-1zM154 161h1v3h-1zM154 167h1v3h-1zM154 173h1v3h-1zM154 179h1v3h-1zM154 185h1v3h-1zM154 191h1v3h-1zM154 197h1v3h-1zM154 203h1v3h-1zM154 209h1v3h-1zM154 215h1v3h-1zM154 221h1v3h-1zM154 227h1v3h-1zM154 233h1v3h-1zM154 239h1v3h-1zM154 245h1v3h-1zM154 251h1v3h-1zM154 257h1v3h-1zM154 263h1v3h-1zM154 269h1v3h-1zM154 275h1v3h-1zM154 281h1v3h-1zM154 287h1v3h-1zM154 293h1v3h-1zM154 299h1v3h-1zM154 305h1v3h-1zM154 311h1v3h-1zM154 317h1v3h-1zM154 323h1v3h-1zM154 329h1v3h-1zM154 335h1v3h-1zM154 341h1v3h-1zM154 347h1v3h-1zM154 353h1v3h-1zM154 359h1v3h-1zM154 365h1v3h-1zM154 371h1v3h-1zM154 377h1v3h-1zM154 383h1v3h-1zM154 389h1v3h-1zM154 395h1v3h-1zM154 401h1v3h-1zM154 407h1v3h-1zM154 413h1v3h-1zM154 419h1v3h-1zM154 425h1v3h-1zM154 431h1v3h-1zM154 437h1v3h-1zM154 443h1v3h-1zM154 449h1v3h-1zM154 455h1v3h-1zM154 461h1v3h-1zM154 467h1v3h-1zM154 473h1v3h-1zM154 479h1v3h-1zM154 485h1v3h-1zM154 491h1v3h-1zM154 497h1v3h-1zM154 503h1v3h-1zM154 509h1v3h-1zM154 515h1v3h-1zM154 521h1v3h-1zM154 527h1v3h-1zM154 533h1v3h-1zM154 539h1v3h-1zM154 545h1v3h-1zM154 551h1v3h-1zM154 557h1v3h-1zM154 563h1v3h-1zM154 569h1v3h-1zM154 575h1v3h-1zM154 581h1v3h-1zM154 587h1v3h-1zM154 593h1v3h-1zM154 599h1v3h-1zM154 605h1v3h-1zM154 611h1v3h-1zM154 617h1v3h-1zM154 623h1v3h-1zM154 629h1v3h-1zM154 635h1v3h-1zM154 641h1v3h-1zM154 647h1v3h-1zM154 653h1v3h-1zM154 659h1v3h-1zM154 665h1v3h-1zM332 125h1v3h-1zM332 131h1v3h-1zM332 137h1v3h-1zM332 143h1v3h-1zM332 149h1v3h-1zM332 155h1v3h-1zM332 161h1v3h-1zM332 167h1v3h-1zM332 173h1v3h-1zM332 179h1v3h-1zM332 185h1v3h-1zM332 191h1v3h-1zM332 197h1v3h-1zM332 203h1v3h-1zM332 209h1v3h-1zM332 215h1v3h-1zM332 221h1v3h-1zM332 227h1v3h-1zM332 233h1v3h-1zM332 239h1v3h-1zM332 245h1v3h-1zM332 251h1v3h-1zM332 257h1v3h-1zM332 263h1v3h-1zM332 269h1v3h-1zM332 275h1v3h-1zM332 281h1v3h-1zM332 287h1v3h-1zM332 293h1v3h-1zM332 299h1v3h-1zM332 305h1v3h-1zM332 311h1v3h-1zM332 317h1v3h-1zM332 323h1v3h-1zM332 329h1v3h-1zM332 335h1v3h-1zM332 341h1v3h-1zM332 347h1v3h-1zM332 353h1v3h-1zM332 359h1v3h-1zM332 365h1v3h-1zM332 371h1v3h-1zM332 377h1v3h-1zM332 383h1v3h-1zM332 389h1v3h-1zM332 395h1v3h-1zM332 401h1v3h-1zM332 407h1v3h-1zM332 413h1v3h-1zM332 419h1v3h-1zM332 425h1v3h-1zM332 431h1v3h-1zM332 437h1v3h-1zM332 443h1v3h-1zM332 449h1v3h-1zM332 455h1v3h-1zM332 461h1v3h-1zM332 467h1v3h-1zM332 473h1v3h-1zM332 479h1v3h-1zM332 485h1v3h-1zM332 491h1v3h-1zM332 497h1v3h-1zM332 503h1v3h-1zM332 509h1v3h-1zM332 515h1v3h-1zM332 521h1v3h-1zM332 527h1v3h-1zM332 533h1v3h-1zM332 539h1v3h-1zM332 545h1v3h-1zM332 551h1v3h-1zM332 557h1v3h-1zM332 563h1v3h-1zM332 569h1v3h-1zM332 575h1v3h-1zM332 581h1v3h-1zM332 587h1v3h-1zM332 593h1v3h-1zM332 599h1v3h-1zM332 605h1v3h-1zM332 611h1v3h-1zM332 617h1v3h-1zM332 623h1v3h-1zM332 629h1v3h-1zM332 635h1v3h-1zM332 641h1v3h-1zM332 647h1v3h-1zM332 653h1v3h-1zM332 659h1v3h-1zM332 665h1v3h-1zM510 125h1v3h-1zM510 131h1v3h-1zM510 137h1v3h-1zM510 143h1v3h-1zM510 149h1v3h-1zM510 155h1v3h-1zM510 161h1v3h-1zM510 167h1v3h-1zM510 173h1v3h-1zM510 179h1v3h-1zM510 185h1v3h-1zM510 191h1v3h-1zM510 197h1v3h-1zM510 203h1v3h-1zM510 209h1v3h-1zM510 215h1v3h-1zM510 221h1v3h-1zM510 227h1v3h-1zM510 233h1v3h-1zM510 239h1v3h-1zM510 245h1v3h-1zM510 251h1v3h-1zM510 257h1v3h-1zM510 263h1v3h-1zM510 269h1v3h-1zM510 275h1v3h-1zM510 281h1v3h-1zM510 287h1v3h-1zM510 293h1v3h-1zM510 299h1v3h-1zM510 305h1v3h-1zM510 311h1v3h-1zM510 317h1v3h-1zM510 323h1v3h-1zM510 329h1v3h-1zM510 335h1v3h-1zM510 341h1v3h-1zM510 347h1v3h-1zM510 353h1v3h-1zM510 359h1v3h-1zM510 365h1v3h-1zM510 371h1v3h-1zM510 377h1v3h-1zM510 383h1v3h-1zM510 389h1v3h-1zM510 395h1v3h-1zM510 401h1v3h-1zM510 407h1v3h-1zM510 413h1v3h-1zM510 419h1v3h-1zM510 425h1v3h-1zM510 431h1v3h-1zM510 437h1v3h-1zM510 443h1v3h-1zM510 449h1v3h-1zM510 455h1v3h-1zM510 461h1v3h-1zM510 467h1v3h-1zM510 473h1v3h-1zM510 479h1v3h-1zM510 485h1v3h-1zM510 491h1v3h-1zM510 497h1v3h-1zM510 503h1v3h-1zM510 509h1v3h-1zM510 515h1v3h-1zM510 521h1v3h-1zM510 527h1v3h-1zM510 533h1v3h-1zM510 539h1v3h-1zM510 545h1v3h-1zM510 551h1v3h-1zM510 557h1v3h-1zM510 563h1v3h-1zM510 569h1v3h-1zM510 575h1v3h-1zM510 581h1v3h-1zM510 587h1v3h-1zM510 593h1v3h-1zM510 599h1v3h-1zM510 605h1v3h-1zM510 611h1v3h-1zM510 617h1v3h-1zM510 623h1v3h-1zM510 629h1v3h-1zM510 635h1v3h-1zM510 641h1v3h-1zM510 647h1v3h-1zM510 653h1v3h-1zM510 659h1v3h-1zM510 665h1v3h-1zM688 125h1v3h-1zM688 131h1v3h-1zM688 137h1v3h-1zM688 143h1v3h-1zM688 149h1v3h-1zM688 155h1v3h-1zM688 161h1v3h-1zM688 167h1v3h-1zM688 173h1v3h-1zM688 179h1v3h-1zM688 185h1v3h-1zM688 191h1v3h-1zM688 197h1v3h-1zM688 203h1v3h-1zM688 209h1v3h-1zM688 215h1v3h-1zM688 221h1v3h-1zM688 227h1v3h-1zM688 233h1v3h-1zM688 239h1v3h-1zM688 245h1v3h-1zM688 251h1v3h-1zM688 257h1v3h-1zM688 263h1v3h-1zM688 269h1v3h-1zM688 275h1v3h-1zM688 281h1v3h-1zM688 287h1v3h-1zM688 293h1v3h-1zM688 299h1v3h-1zM688 305h1v3h-1zM688 311h1v3h-1zM688 317h1v3h-1zM688 323h1v3h-1zM688 329h1v3h-1zM688 335h1v3h-1zM688 341h1v3h-1zM688 347h1v3h-1zM688 353h1v3h-1zM688 359h1v3h-1zM688 365h1v3h-1zM688 371h1v3h-1zM688 377h1v3h-1zM688 383h1v3h-1zM688 389h1v3h-1zM688 395h1v3h-1zM688 401h1v3h-1zM688 407h1v3h-1zM688 413h1v3h-1zM688 419h1v3h-1zM688 425h1v3h-1zM688 431h1v3h-1zM688 437h1v3h-1zM688 443h1v3h-1zM688 449h1v3h-1zM688 455h1v3h-1zM688 461h1v3h-1zM688 467h1v3h-1zM688 473h1v3h-1zM688 479h1v3h-1zM688 485h1v3h-1zM688 491h1v3h-1zM688 497h1v3h-1zM688 503h1v3h-1zM688 509h1v3h-1zM688 515h1v3h-1zM688 521h1v3h-1zM688 527h1v3h-1zM688 533h1v3h-1zM688 539h1v3h-1zM688 545h1v3h-1zM688 551h1v3h-1zM688 557h1v3h-1zM688 563h1v3h-1zM688 569h1v3h-1zM688 575h1v3h-1zM688 581h1v3h-1zM688 587h1v3h-1zM688 593h1v3h-1zM688 599h1v3h-1zM688 605h1v3h-1zM688 611h1v3h-1zM688 617h1v3h-1zM688 623h1v3h-1zM688 629h1v3h-1zM688 635h1v3h-1zM688 641h1v3h-1zM688 647h1v3h-1zM688 653h1v3h-1zM688 659h1v3h-1zM688 665h1v3h-1zM866 125h1v3h-1zM866 131h1v3h-1zM866 137h1v3h-1zM866 143h1v3h-1zM866 149h1v3h-1zM866 155h1v3h-1zM866 161h1v3h-1zM866 167h1v3h-1zM866 173h1v3h-1zM866 179h1v3h-1zM866 185h1v3h-1zM866 191h1v3h-1zM866 197h1v3h-1zM866 203h1v3h-1zM866 209h1v3h-1zM866 215h1v3h-1zM866 221h1v3h-1zM866 227h1v3h-1zM866 233h1v3h-1zM866 239h1v3h-1zM866 245h1v3h-1zM866 251h1v3h-1zM866 257h1v3h-1zM866 263h1v3h-1zM866 269h1v3h-1zM866 275h1v3h-1zM866 281h1v3h-1zM866 287h1v3h-1zM866 293h1v3h-1zM866 299h1v3h-1zM866 305h1v3h-1zM866 311h1v3h-1zM866 317h1v3h-1zM866 323h1v3h-1zM866 329h1v3h-1zM866 335h1v3h-1zM866 341h1v3h-1zM866 347h1v3h-1zM866 353h1v3h-1zM866 359h1v3h-1zM866 365h1v3h-1zM866 371h1v3h-1zM866 377h1v3h-1zM866 383h1v3h-1zM866 389h1v3h-1zM866 395h1v3h-1zM866 401h1v3h-1zM866 407h1v3h-1zM866 413h1v3h-1zM866 419h1v3h-1zM866 425h1v3h-1zM866 431h1v3h-1zM866 437h1v3h-1zM866 443h1v3h-1zM866 449h1v3h-1zM866 455h1v3h-1zM866 461h1v3h-1zM866 467h1v3h-1zM866 473h1v3h-1zM866 479h1v3h-1zM866 485h1v3h-1zM866 491h1v3h-1zM866 497h1v3h-1zM866 503h1v3h-1zM866 509h1v3h-1zM866 515h1v3h-1zM866 521h1v3h-1zM866 527h1v3h-1zM866 533h1v3h-1zM866 539h1v3h-1zM866 545h1v3h-1zM866 551h1v3h-1zM866 557h1v3h-1zM866 563h1v3h-1zM866 569h1v3h-1zM866 575h1v3h-1zM866 581h1v3h-1zM866 587h1v3h-1zM866 593h1v3h-1zM866 599h1v3h-1zM866 605h1v3h-1zM866 611h1v3h-1zM866 617h1v3h-1zM866 623h1v3h-1zM866 629h1v3h-1zM866 635h1v3h-1zM866 641h1v3h-1zM866 647h1v3h-1zM866 653h1v3h-1zM866 659h1v3h-1zM866 665h1v3h-1z" fill="#808080"/>
<rect x="65" y="124" width="892" height="1" fill="#000"/>
<rect x="65" y="670" width="892" height="1" fill="#000"/>
<rect x="65" y="124" width="1" height="547" fill="#000"/>
<rect x="956" y="124" width="1" height="547" fill="#000"/>
<rect x="63" y="124" width="2" height="1" fill="#000"/>
<rect x="63" y="261" width="2" height="1" fill="#000"/>
<rect x="63" y="398" width="2" height="1" fill="#000"/>
<rect x="63" y="534" width="2" height="1" fill="#000"/>
<rect x="63" y="670" width="2" height="1" fill="#000"/>
<rect x="63" y="152" width="2" height="1" fill="#000"/>
<rect x="63" y="179" width="2" height="1" fill="#000"/>
<rect x="63" y="206" width="2" height="1" fill="#000"/>
<rect x="63" y="234" width="2" height="1" fill="#000"/>
<rect x="63" y="288" width="2" height="1" fill="#000"/>
<rect x="63" y="315" width="2" height="1" fill="#000"/>
<rect x="63" y="342" width="2" height="1" fill="#000"/>
<rect x="63" y="370" width="2" height="1" fill="#000"/>
<rect x="63" y="425" width="2" height="1" fill="#000"/>
<rect x="63" y="452" width="2" height="1" fill="#000"/>
<rect x="63" y="479" width="2" height="1" fill="#000"/>
<rect x="63" y="507" width="2" height="1" fill="#000"/>
<rect x="63" y="561" width="2" height="1" fill="#000"/>
<rect x="63" y="589" width="2" height="1" fill="#000"/>
<rect x="63" y="616" width="2" height="1" fill="#000"/>
<rect x="63" y="643" width="2" height="1" fill="#000"/>
<rect x="65" y="671" width="1" height="2" fill="#000"/>
<rect x="243" y="671" width="1" height="2" fill="#000"/>
<rect x="421" y="671" width="1" height="2" fill="#000"/>
<rect x="599" y="671" width="1" height="2" fill="#000"/>
<rect x="777" y="671" width="1" height="2" fill="#000"/>
<rect x="154" y="671" width="1" height="2" fill="#000"/>
<rect x="332" y="671" width="1" height="2" fill="#000"/>
<rect x="510" y="671" width="1" height="2" fill="#000"/>
<rect x="688" y="671" width="1" height="2" fill="#000"/>
<rect x="866" y="671" width="1" height="2" fill="#000"/>
<rect x="956" y="671" width="1" height="2" fill="#000"/>
<path d="M65.0 656.5 L66.1 656.3 L67.6 656.2 L69.4 657.0 L71.3 656.3 L73.2 657.0 L75.0 656.8 L76.7 656.3 L78.3 656.9 L80.0 656.1 L81.7 656.5 L83.3 655.9 L85.0 655.9 L86.7 656.4 L88.3 657.1 L90.0 656.2 L91.7 656.5 L93.3 657.1 L95.0 657.6 L96.7 657.1 L98.3 656.7 L100.0 657.4 L101.7 656.0 L103.3 657.1 L105.0 656.2 L106.7 656.0 L108.3 655.9 L110.0 656.2 L111.7 656.9 L113.3 656.1 L115.0 656.6 L116.7 656.7 L118.4 656.3 L120.2 656.5 L121.9 655.8 L123.5 655.7 L125.0 655.9 L127.0 656.6 L128.8 656.3 L130.4 656.1 L132.0 656.1 L133.5 655.4 L134.9 654.4 L136.2 654.1 L137.8 652.6 L138.7 651.1 L139.6 650.5 L140.5 649.4 L141.5 648.7 L142.5 647.3 L143.5 645.4 L144.5 645.0 L145.5 642.5 L146.3 641.8 L147.2 641.1 L148.0 639.1 L148.9 638.3 L149.7 636.4 L150.6 636.1 L151.5 634.9 L152.3 633.3 L153.2 632.4 L154.0 630.3 L154.8 629.5 L155.6 628.0 L156.4 626.5 L157.2 624.9 L158.0 623.9 L158.8 622.6 L159.5 620.5 L160.3 619.4 L161.1 617.3 L161.8 617.0 L162.9 615.3 L163.9 614.4 L165.0 612.8 L166.0 610.8 L167.0 609.8 L167.9 608.9 L168.8 606.7 L169.7 605.8 L170.4 603.8 L171.1 602.2 L171.7 600.5 L172.5 599.9 L173.4 597.5 L174.2 596.5 L175.1 595.5 L176.0 595.0 L176.9 592.7 L177.9 592.1 L179.0 591.1 L180.1 590.4 L181.2 589.2 L182.4 588.3 L183.7 586.5 L185.0 585.7 L186.3 584.7 L187.7 584.5 L189.1 583.7 L190.6 581.5 L192.0 580.5 L193.2 579.7 L194.4 578.8 L195.6 578.2 L196.8 577.3 L198.0 575.9 L199.2 574.5 L200.5 574.1 L201.8 573.2 L203.1 572.6 L204.4 572.3 L205.7 571.3 L207.1 570.3 L208.6 569.8 L210.0 569.3 L211.5 567.9 L213.0 568.6 L214.4 567.9 L215.8 567.6 L217.1 567.1 L218.4 566.1 L220.1 565.8 L221.6 565.1 L223.0 565.7 L224.5 564.8 L225.9 564.6 L227.5 564.6 L229.2 564.2 L230.5 564.1 L231.8 563.3 L233.2 562.8 L234.5 562.6 L236.0 562.0 L237.4 561.9 L239.0 560.9 L240.6 561.7 L242.3 560.9 L244.0 560.0 L245.3 560.0 L246.7 560.0 L248.1 559.9 L249.6 559.5 L251.1 560.5 L252.6 560.6 L254.2 559.9 L255.7 559.9 L257.3 559.3 L258.9 559.3 L260.5 559.6 L262.0 559.5 L263.5 560.3 L265.0 559.3 L266.6 559.1 L268.1 560.4 L269.7 559.7 L271.2 559.2 L272.7 559.7 L274.2 559.0 L275.7 559.7 L277.2 560.3 L278.8 560.1 L280.3 559.8 L281.9 559.2 L283.4 559.3 L285.0 559.0 L286.5 559.9 L288.1 559.6 L289.8 560.0 L291.5 559.5 L293.2 559.4 L294.9 560.3 L296.6 560.7 L298.3 560.5 L299.9 560.5 L301.4 560.4 L302.9 560.2 L304.2 559.3 L305.4 559.4 L306.5 558.8 L307.9 557.5 L309.0 556.5 L309.8 555.7 L310.5 554.3 L311.1 553.4 L311.5 552.0 L312.0 550.1 L312.4 548.8 L313.0 547.3 L313.5 546.0 L314.0 544.2 L314.4 542.7 L314.9 541.2 L315.3 539.7 L315.7 538.2 L316.1 536.9 L316.5 535.5 L316.9 534.0 L317.4 532.3 L317.8 531.0 L318.3 529.6 L318.8 527.6 L319.3 526.5 L319.8 525.1 L320.2 523.6 L320.7 522.1 L321.2 520.5 L321.7 518.9 L322.2 517.9 L322.7 516.2 L323.2 514.9 L323.8 513.5 L324.4 511.6 L324.9 510.1 L325.5 509.0 L326.0 507.4 L326.5 505.7 L327.0 504.4 L327.5 503.2 L328.2 501.7 L328.9 500.3 L329.4 497.9 L330.0 497.4 L330.7 496.0 L331.2 494.2 L331.8 492.3 L332.4 491.2 L333.0 489.1 L333.6 487.5 L334.2 487.5 L334.8 485.8 L335.6 484.1 L336.4 483.3 L337.2 481.4 L338.0 480.8 L338.8 479.6 L339.8 477.2 L340.8 475.7 L341.8 474.4 L342.9 473.1 L344.2 472.8 L345.5 471.7 L347.0 471.4 L348.5 470.5 L350.1 471.1 L351.7 469.9 L353.4 469.7 L355.0 469.5 L356.7 469.6 L358.4 468.7 L360.0 469.0 L361.5 467.8 L362.8 466.8 L364.0 465.5 L365.1 463.4 L366.3 462.9 L367.9 461.5 L369.4 460.4 L371.2 460.9 L372.6 459.8 L374.1 460.2 L375.8 460.6 L377.7 460.6 L379.1 460.5 L380.7 461.2 L382.4 461.7 L384.1 462.4 L385.8 461.8 L387.4 462.7 L388.9 462.3 L390.4 462.3 L391.8 462.8 L393.3 462.3 L395.0 462.2 L397.0 462.5 L398.4 462.7 L400.0 462.1 L401.7 462.4 L403.4 462.3 L405.2 462.4 L407.0 462.8 L408.8 462.5 L410.5 462.7 L412.0 462.6 L413.3 463.2 L415.4 462.7 L417.1 462.6 L418.6 462.3 L419.9 461.0 L421.4 461.1 L422.9 461.3 L424.2 460.9 L425.6 459.6 L427.3 459.4 L429.4 459.6 L430.7 459.0 L432.3 459.2 L434.0 459.0 L435.8 459.8 L437.6 459.9 L439.5 460.1 L441.3 459.0 L442.9 459.8 L444.4 459.7 L445.6 458.9 L448.3 460.0 L449.8 460.1 L451.3 458.1 L452.1 458.3 L452.8 456.5 L453.5 455.4 L454.3 454.7 L455.0 452.9 L455.6 450.4 L456.3 448.6 L456.6 447.4 L457.0 446.0 L457.3 444.5 L457.7 443.1 L458.0 441.8 L458.3 439.8 L458.6 438.5 L458.9 436.8 L459.2 434.9 L459.5 433.5 L459.8 432.1 L460.1 430.5 L460.4 428.8 L460.8 427.7 L461.1 425.9 L461.4 424.4 L461.7 422.3 L462.1 420.9 L462.4 419.2 L462.7 418.1 L463.0 416.2 L463.3 414.5 L463.6 413.0 L463.8 411.8 L464.1 410.3 L464.4 408.4 L464.6 406.7 L464.9 405.6 L465.1 403.7 L465.4 402.2 L465.6 400.2 L465.9 398.6 L466.1 397.5 L466.3 395.9 L466.6 394.4 L466.8 393.8 L467.2 391.4 L467.7 389.7 L468.1 387.8 L468.4 386.9 L468.9 385.0 L469.3 384.0 L469.8 382.1 L470.3 380.3 L470.9 378.7 L471.4 377.2 L472.0 375.3 L472.5 373.6 L473.6 372.3 L474.6 370.5 L475.7 368.8 L476.4 367.5 L477.0 365.7 L477.7 364.3 L478.3 363.0 L479.0 361.7 L480.0 360.7 L480.9 358.9 L482.2 358.8 L483.3 358.7 L484.6 359.7 L486.1 360.3 L487.5 361.6 L488.7 362.1 L490.4 364.1 L492.0 364.7 L493.5 364.8 L495.1 365.3 L496.6 365.8 L498.4 364.6 L500.0 365.9 L501.7 365.6 L503.4 366.0 L504.9 366.5 L506.6 365.4 L508.0 364.9 L509.7 364.4 L511.2 364.3 L512.7 362.9 L514.4 363.1 L516.2 362.3 L517.7 361.6 L519.3 360.6 L521.0 359.8 L522.7 358.7 L524.3 358.3 L525.9 357.8 L527.5 358.4 L529.0 357.5 L530.7 357.2 L532.4 357.0 L534.0 358.1 L535.7 358.1 L537.5 357.9 L539.2 357.5 L540.7 357.7 L542.1 358.0 L544.0 359.1 L545.3 359.7 L547.0 361.1 L548.4 361.4 L550.0 362.9 L551.8 363.4 L553.4 363.3 L555.0 363.2 L556.7 364.6 L558.2 363.8 L559.8 364.0 L561.5 363.7 L563.0 364.4 L564.6 364.7 L566.3 364.9 L568.0 364.6 L569.6 365.2 L571.2 364.7 L572.9 365.3 L574.6 365.2 L576.2 365.7 L577.7 365.1 L579.5 364.5 L581.1 364.2 L582.7 363.2 L584.2 362.9 L585.7 362.8 L587.1 363.6 L588.5 363.1 L589.8 360.7 L590.1 359.7 L590.3 358.3 L590.6 357.0 L590.8 356.0 L591.1 354.0 L591.3 352.8 L591.6 351.1 L591.8 349.0 L592.1 347.7 L592.3 345.9 L592.5 343.9 L592.8 342.1 L593.0 340.4 L593.2 338.2 L593.5 336.8 L593.7 335.1 L593.9 333.8 L594.1 332.4 L594.3 331.1 L594.6 329.0 L595.0 327.3 L595.3 325.6 L595.6 324.0 L595.9 322.3 L596.2 320.9 L596.4 319.6 L596.7 318.4 L597.0 316.8 L597.3 315.8 L597.6 314.1 L597.9 312.7 L598.2 311.1 L598.5 309.5 L598.8 307.7 L599.1 305.8 L599.4 304.6 L599.7 302.9 L600.0 301.2 L600.3 299.7 L600.5 298.3 L600.8 296.6 L601.0 295.7 L601.4 293.3 L601.7 291.3 L601.9 289.8 L602.1 288.6 L602.4 286.8 L602.7 285.6 L603.1 284.0 L603.6 282.1 L604.1 280.5 L604.6 278.9 L605.2 277.1 L605.6 275.8 L606.0 274.3 L606.4 272.7 L606.9 270.8 L607.4 269.3 L607.8 267.8 L608.2 266.7 L608.6 265.2 L609.3 263.2 L609.9 261.2 L610.4 259.3 L611.1 258.2 L612.2 256.9 L613.3 255.2 L614.5 254.0 L616.1 252.8 L617.8 253.5 L618.6 254.4 L619.4 255.8 L620.3 256.8 L621.2 259.1 L622.6 259.0 L624.0 260.8 L625.4 261.6 L626.5 261.7 L627.5 264.0 L628.8 265.7 L630.3 266.5 L632.0 266.1 L633.9 266.1 L635.5 266.2 L637.3 267.3 L639.0 266.2 L640.6 267.0 L642.3 267.5 L644.0 269.5 L645.6 270.6 L646.7 268.7 L647.6 268.3 L648.6 266.2 L649.8 265.4 L651.1 264.3 L652.5 263.0 L654.1 263.2 L655.7 261.9 L657.2 260.4 L658.8 259.3 L660.4 258.9 L662.0 258.0 L663.3 257.4 L664.9 257.7 L666.0 259.3 L667.5 260.7 L668.7 262.3 L669.9 262.1 L671.3 264.1 L672.7 265.1 L674.2 264.8 L675.8 266.3 L677.5 266.1 L679.3 266.4 L681.0 265.6 L682.6 265.9 L684.4 266.3 L686.2 267.5 L687.8 267.4 L689.4 267.6 L690.9 268.4 L692.3 269.2 L693.7 269.6 L695.3 269.7 L696.4 270.3 L697.6 268.8 L698.8 268.7 L700.0 266.7 L701.4 265.7 L702.8 265.3 L704.3 264.3 L705.8 264.0 L707.3 264.4 L709.0 263.9 L710.9 263.6 L713.0 263.2 L714.3 263.6 L715.8 263.7 L717.4 263.2 L719.0 263.6 L720.8 262.8 L722.5 263.9 L724.2 263.7 L725.8 264.3 L727.3 264.3 L728.6 264.0 L729.8 263.8 L732.2 265.4 L733.8 264.6 L735.1 265.3 L736.5 265.1 L738.1 265.0 L739.6 265.5 L741.1 265.0 L742.4 261.7 L742.7 261.2 L743.0 259.9 L743.3 258.9 L743.6 257.5 L743.9 256.0 L744.1 254.5 L744.4 253.0 L744.7 251.8 L744.9 249.9 L745.2 248.0 L745.4 246.8 L745.7 245.1 L745.9 243.1 L746.2 241.3 L746.4 239.7 L746.7 238.1 L746.9 236.8 L747.2 235.1 L747.4 233.8 L747.6 232.3 L747.9 231.0 L748.1 229.7 L748.3 228.1 L748.6 226.4 L748.8 224.9 L749.0 223.5 L749.2 221.9 L749.5 220.3 L749.7 218.6 L749.9 217.3 L750.1 216.2 L750.4 214.2 L750.6 212.9 L750.8 211.5 L751.1 210.1 L751.3 208.2 L751.5 206.7 L751.8 205.2 L752.0 203.8 L752.3 202.3 L752.5 201.1 L752.7 199.5 L753.0 198.0 L753.2 196.0 L753.4 194.6 L753.6 193.5 L753.9 192.1 L754.1 190.4 L754.3 189.0 L754.5 187.2 L754.7 185.8 L755.0 184.5 L755.2 182.7 L755.4 181.1 L755.6 179.5 L755.8 177.4 L756.0 175.7 L756.2 174.1 L756.4 172.8 L756.6 171.3 L756.8 169.9 L757.0 168.3 L757.2 166.8 L757.3 165.5 L757.5 164.0 L757.7 162.1 L757.9 160.0 L758.1 158.7 L758.3 156.7 L758.5 155.6 L758.6 153.9 L758.8 152.3 L759.0 150.8 L759.2 149.5 L759.4 148.5 L759.8 146.4 L760.3 144.1 L760.8 142.2 L761.3 140.9 L761.8 139.7 L762.3 138.5 L763.8 138.2 L765.3 140.7 L765.9 141.1 L766.5 143.2 L767.0 145.0 L767.6 147.0 L768.2 148.5 L768.8 150.2 L769.4 151.4 L769.9 152.8 L770.5 154.4 L771.1 156.6 L771.5 157.8 L771.9 159.2 L772.3 160.7 L772.7 162.6 L773.2 164.3 L773.6 165.7 L774.1 166.7 L774.9 169.1 L775.8 171.0 L776.7 171.3 L778.0 172.2 L779.3 173.7 L780.9 174.7 L782.6 175.9 L784.3 175.9 L785.8 177.2 L788.0 177.5 L789.9 176.9 L791.6 175.4 L792.3 175.4 L793.0 173.2 L793.6 172.1 L794.2 170.1 L794.8 168.2 L795.5 167.4 L796.3 165.2 L797.1 164.5 L797.9 162.2 L798.8 160.3 L799.6 158.9 L800.4 158.1 L801.7 156.8 L803.0 156.2 L804.3 154.8 L805.4 155.6 L806.5 156.4 L807.7 158.7 L809.2 158.7 L810.3 159.3 L811.6 160.2 L812.9 161.5 L814.3 163.0 L815.7 163.8 L817.0 164.3 L818.6 165.5 L820.2 166.2 L821.8 166.2 L823.4 166.6 L824.8 168.2 L826.8 168.5 L828.5 167.8 L830.4 169.0 L832.0 169.1 L833.7 169.6 L835.5 170.1 L837.2 170.3 L838.9 170.6 L840.7 171.4 L842.4 171.9 L844.0 172.8 L845.9 171.4 L847.7 171.8 L849.5 169.7 L850.6 169.0 L851.7 168.5 L852.8 167.2 L853.8 165.5 L854.9 164.1 L856.6 163.6 L858.2 162.8 L860.0 163.1 L861.4 161.8 L863.0 162.0 L864.5 162.8 L866.0 161.8 L867.5 162.9 L869.0 164.2 L870.5 164.9 L871.9 164.8 L873.5 165.9 L875.0 167.2 L876.7 169.4 L878.3 168.9 L880.0 169.9 L881.8 170.4 L883.5 169.9 L885.2 170.1 L887.0 171.3 L888.7 171.2 L890.3 171.2 L892.0 173.0 L893.6 173.8 L895.0 174.6 L896.4 174.1 L897.7 174.5 L899.1 173.5 L900.0 171.9 L901.0 170.8 L902.0 167.9 L903.0 166.5 L903.8 165.4 L904.6 164.3 L905.2 162.6 L905.9 160.3 L906.6 159.0 L908.5 158.0 L910.6 157.9 L912.1 158.6 L913.8 157.9 L915.4 159.7 L916.4 160.6 L917.3 161.9 L918.2 163.3 L919.2 164.4 L920.2 165.2 L921.5 166.3 L922.8 167.5 L924.1 169.0 L925.6 168.9 L927.2 169.9 L929.0 171.4 L930.8 171.3 L932.4 171.6 L934.3 172.1 L936.0 173.1 L937.8 172.7 L939.2 173.0 L940.6 172.0 L942.0 171.2 L943.3 169.2 L944.7 167.5 L946.0 165.9 L947.3 165.4 L949.3 165.4 L951.4 165.0 L952.9 164.0 L954.4 163.3 L955.5 162.7" fill="none" stroke="#0f7f7d" stroke-width="1" shape-rendering="crispEdges"/>
<path d="M65 654.5 L137.5 654.5 L137.5 558.5 L306.5 558.5 L306.5 458.5 L450.5 458.5 L450.5 360.5 L589.5 360.5 L589.5 262.5 L742.5 262.5 L742.5 162.5 L958 162.5" fill="none" stroke="#000" stroke-width="3" stroke-linejoin="miter"/>
<rect x="160.5" y="153.5" width="311" height="66" rx="5" ry="5" fill="#ffffcc" stroke="#000" stroke-width="1"/>
<rect x="115.5" y="439.5" width="150" height="31" rx="5" ry="5" fill="#ffffcc" stroke="#000" stroke-width="1"/>
<rect x="362.5" y="526.5" width="99" height="39" rx="5" ry="5" fill="#ffffcc" stroke="#000" stroke-width="1"/>
<path d="M471.5 186.5 L535 249.5" stroke="#000" stroke-width="1" fill="none"/>
<path d="M537.5 245.5 L537.5 251 L532 251 Z" fill="#000"/>
<path d="M265.5 455 L288.5 477.5 L296 477.5" stroke="#000" stroke-width="1" fill="none"/>
<path d="M301 477.5 L295 473 L295 482 Z" fill="#000"/>
<path d="M380.5 526 L350.5 495 L350.5 484" stroke="#000" stroke-width="1" fill="none"/>
<path d="M350.5 479 L345.5 484 L355.5 484 Z" fill="#000"/>
</svg>
<div style="position:absolute;right:934px;top:118px;font-size:11px;font-weight:bold;line-height:12px;white-space:nowrap">80.9</div><div style="position:absolute;right:934px;top:255px;font-size:11px;font-weight:bold;line-height:12px;white-space:nowrap">65.7</div><div style="position:absolute;right:934px;top:392px;font-size:11px;font-weight:bold;line-height:12px;white-space:nowrap">50.6</div><div style="position:absolute;right:934px;top:528px;font-size:11px;font-weight:bold;line-height:12px;white-space:nowrap">35.4</div><div style="position:absolute;right:934px;top:664px;font-size:11px;font-weight:bold;line-height:12px;white-space:nowrap">20.3</div><div style="position:absolute;left:25px;width:81px;text-align:center;top:677px;font-size:11px;font-weight:bold;line-height:12px">0.0</div><div style="position:absolute;left:203px;width:81px;text-align:center;top:677px;font-size:11px;font-weight:bold;line-height:12px">65.8</div><div style="position:absolute;left:381px;width:81px;text-align:center;top:677px;font-size:11px;font-weight:bold;line-height:12px">131.6</div><div style="position:absolute;left:559px;width:81px;text-align:center;top:677px;font-size:11px;font-weight:bold;line-height:12px">197.4</div><div style="position:absolute;left:737px;width:81px;text-align:center;top:677px;font-size:11px;font-weight:bold;line-height:12px">263.2</div><div style="position:absolute;left:916px;width:81px;text-align:center;top:677px;font-size:11px;font-weight:bold;line-height:12px">329.0</div><div style="position:absolute;left:430px;width:161px;text-align:center;top:692.5px;font-size:11.5px;font-weight:bold;line-height:12px">Time (sec)</div><div style="position:absolute;left:-1.5px;top:390px;width:40px;text-align:center;font-size:12px;font-weight:bold;line-height:12px;transform:rotate(-90deg);transform-origin:20px 6px;">PV (%)</div><div style="position:absolute;left:160px;width:311px;text-align:center;top:164px;font-size:11.8px;line-height:15px">AS SETPOINT INCREASES IN EQUAL STEPS,<br><span style="margin-right:5px">FLOW RESPONSE GETS FASTER AND</span><br><span style="margin-right:1.5px">MORE CYCLIC.</span></div><div style="position:absolute;left:115px;width:151px;text-align:center;top:447px;font-size:11.8px;line-height:15px">SETPOINT CHANGES</div><div style="position:absolute;left:362px;width:100px;text-align:center;top:538px;font-size:11.8px;line-height:15px">STEAM FLOW</div>
<!-- tabs -->
<div class="abs" style="left:0;top:740px;width:993px;height:2px;background:#e4e4e4"></div>
<svg width="140" height="26" style="position:absolute;left:0;top:717px">
<path d="M5.5 3 V19.5 L9 23.5 H62.5 L66.5 19.5 V3" fill="#fffff0" stroke="#000" stroke-width="1"/>
<path d="M6.5 3 V19" stroke="#fff" stroke-width="1"/>
<path d="M67.5 3 V19.5 L71 23.5 H95 L98.5 19.5 V3 Z" fill="#ff0000"/>
<path d="M67.5 3 V19.5 L70.5 22.5" fill="none" stroke="#fff" stroke-width="1"/>
<path d="M70.5 23.5 H95 L98.5 20 V3" fill="none" stroke="#000" stroke-width="1"/>
<path d="M100.5 3 V19.5 L104 23.5 H127.5 L131 19.5 V3 Z" fill="#128080"/>
<path d="M100.5 3 V19.5 L103.5 22.5" fill="none" stroke="#fff" stroke-width="1.2"/>
<path d="M104 22.5 H127 L130 19.5 V3" fill="none" stroke="#808080" stroke-width="1"/>
<path d="M103.5 23.5 H127.5 L131.5 19.5 V3" fill="none" stroke="#000" stroke-width="1"/>
</svg>
<div class="abs" style="left:17px;top:721.8px;font-size:11px;line-height:12px;transform:scaleY(1.08);transform-origin:0 0">All Data</div>
<div class="abs" style="left:74px;top:721.8px;font-size:12px;line-height:12px;color:#700000;transform:scaleY(1.05);transform-origin:0 0">PD</div>
<div class="abs" style="left:107.5px;top:721.8px;font-size:12px;font-weight:bold;line-height:12px;color:#000;transform:scaleY(1.05);transform-origin:0 0">PV</div>
</body></html>
